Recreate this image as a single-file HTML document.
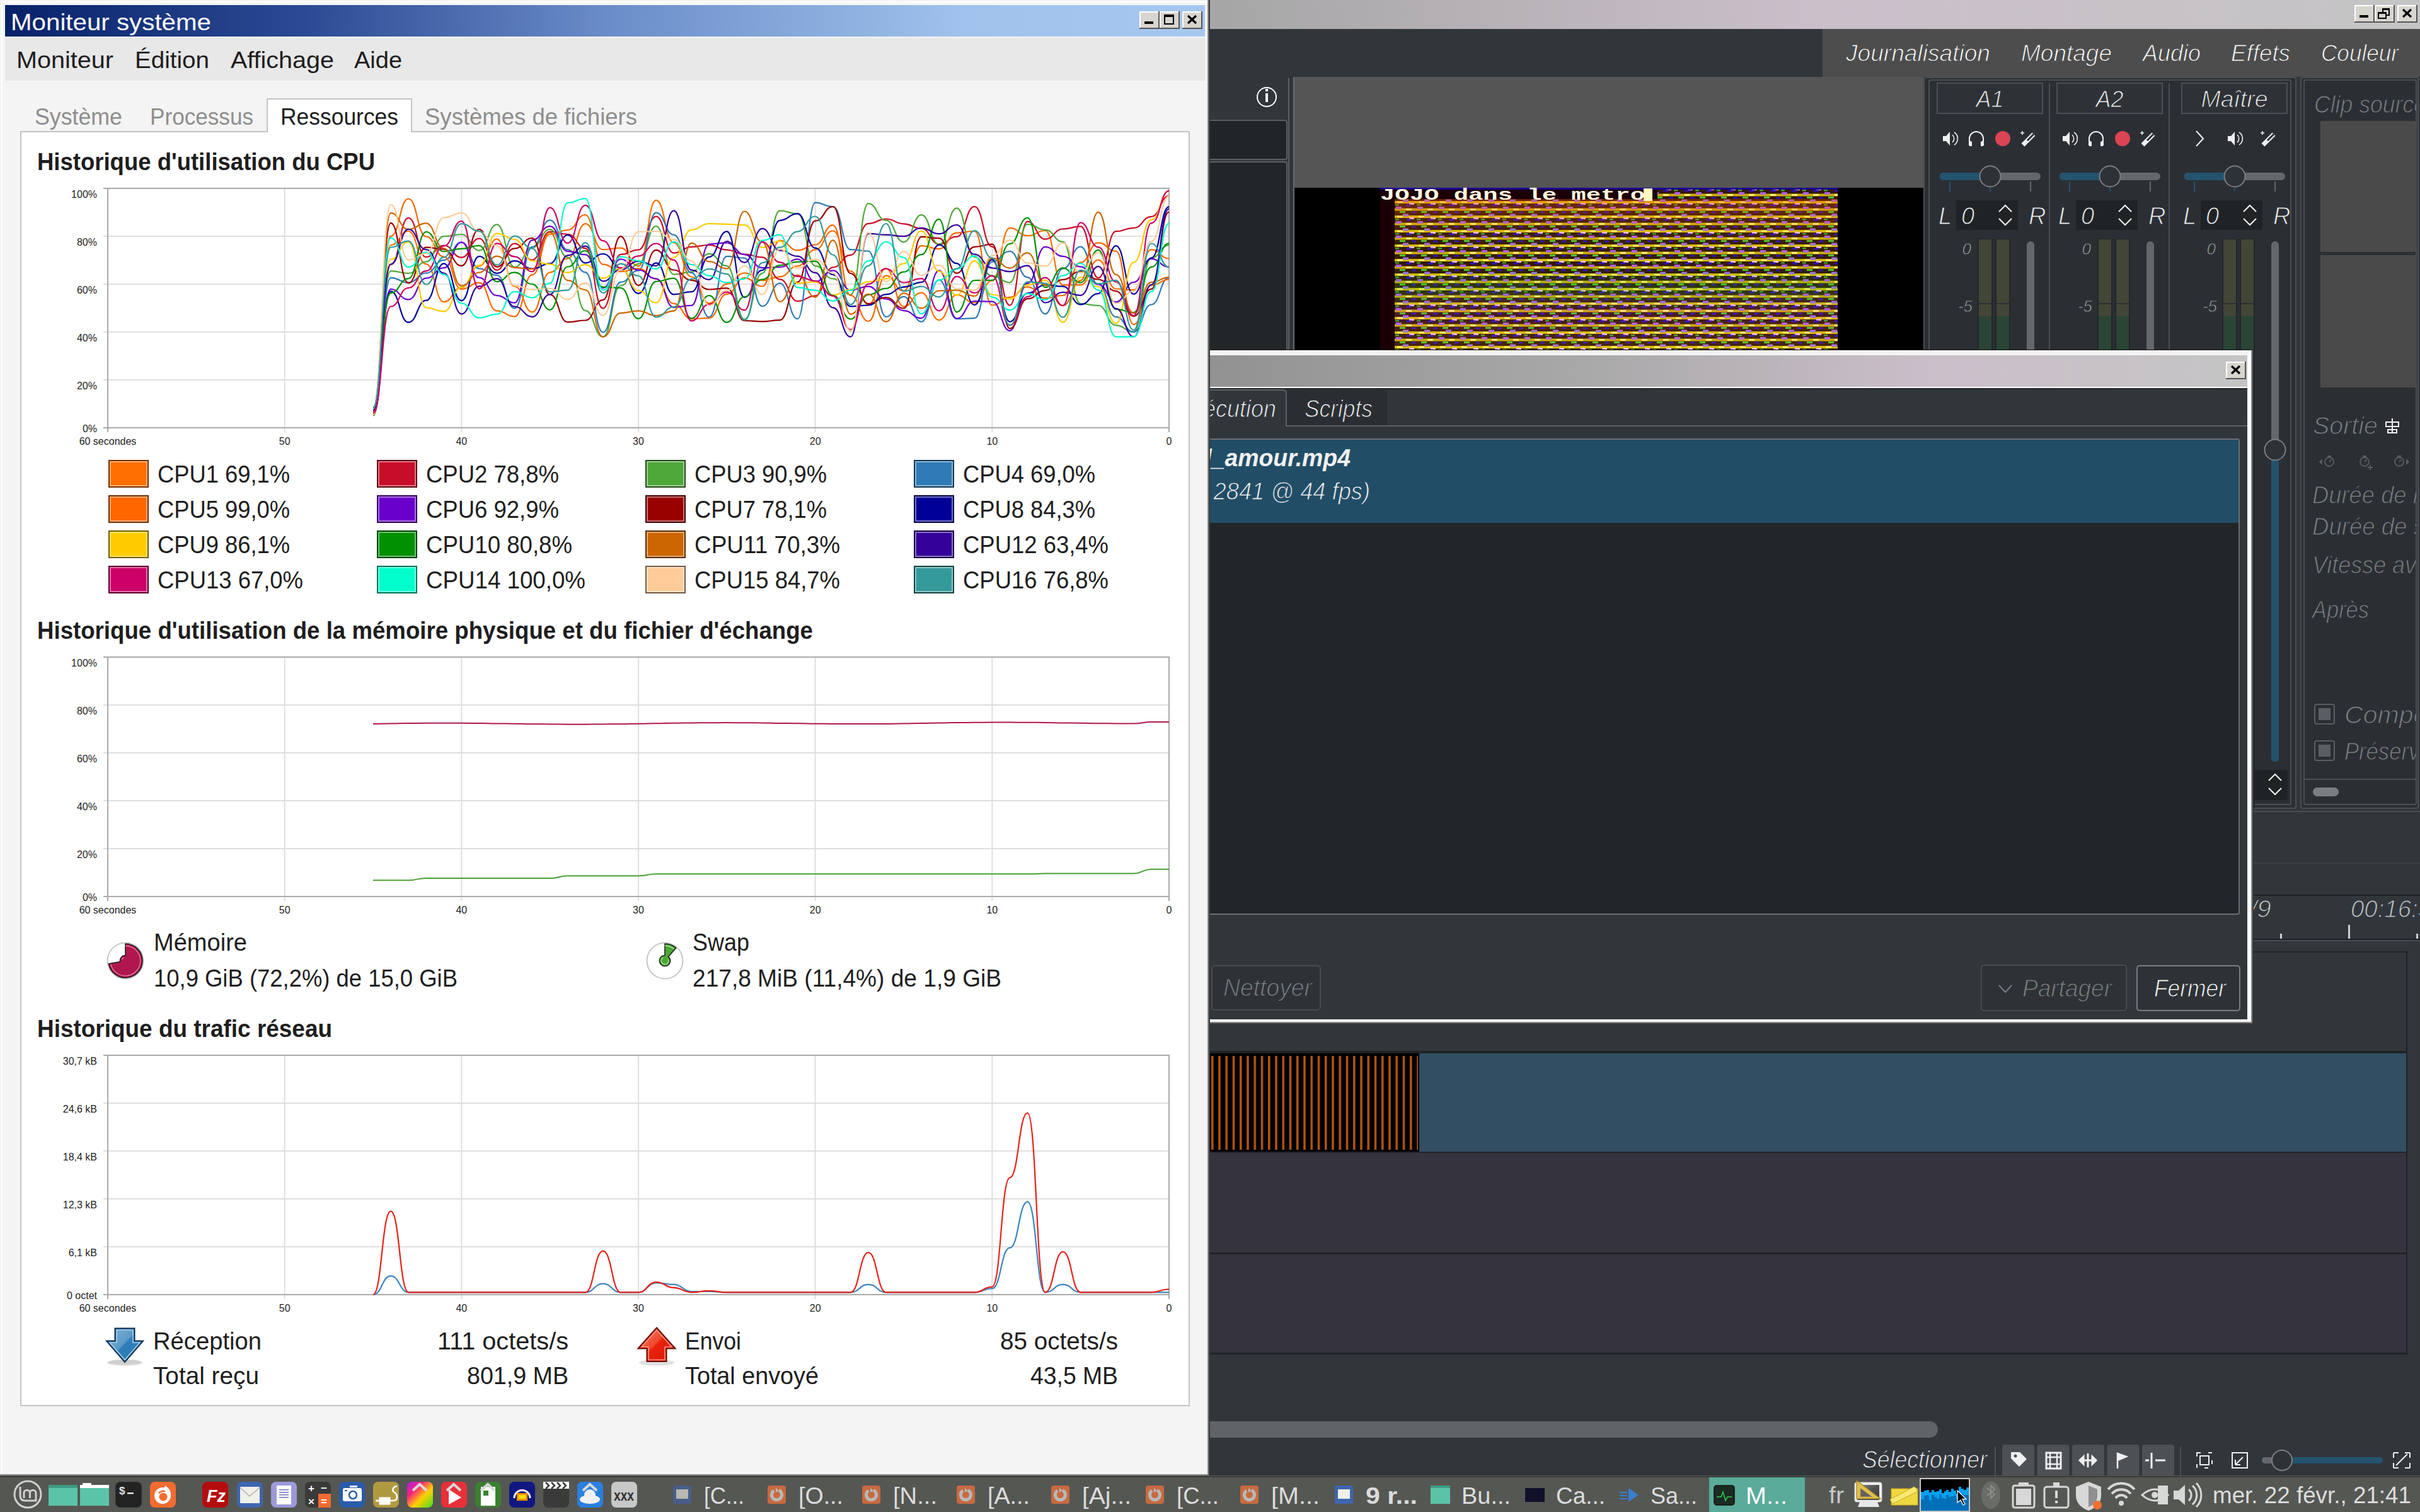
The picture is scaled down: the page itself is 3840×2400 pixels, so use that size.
<!DOCTYPE html><html><head><meta charset="utf-8"><style>html,body{margin:0;padding:0;width:3840px;height:2400px;overflow:hidden;background:#31363b}svg{display:block;font-family:"Liberation Sans",sans-serif}</style></head><body><svg width="3840" height="2400" viewBox="0 0 3840 2400"><rect x="0" y="0" width="1920" height="2344" fill="#f4f4f4" />
<rect x="2" y="2" width="1914" height="2" fill="#ffffff" />
<rect x="2" y="2" width="2" height="2340" fill="#ffffff" />
<rect x="7" y="7" width="1906" height="1" fill="#ffffff" />
<rect x="7" y="7" width="1" height="52" fill="#ffffff" />
<rect x="1916" y="0" width="2" height="2344" fill="#888888" />
<rect x="1918" y="0" width="2" height="2344" fill="#3a3a3a" />
<defs><linearGradient id="tb" x1="0" x2="1" y1="0" y2="0"><stop offset="0" stop-color="#08226a"/><stop offset="0.25" stop-color="#2c4a94"/><stop offset="0.5" stop-color="#6a8cc8"/><stop offset="0.8" stop-color="#a0c2ec"/><stop offset="1" stop-color="#a6c8f0"/></linearGradient></defs>
<rect x="8" y="8" width="1904" height="50" fill="url(#tb)" />
<text x="17" y="48" font-size="37.5" fill="#ffffff" textLength="318" lengthAdjust="spacingAndGlyphs" >Moniteur système</text>
<rect x="1808" y="18" width="32" height="28" fill="#555555" />
<rect x="1808" y="18" width="30" height="26" fill="#ffffff" />
<rect x="1810" y="20" width="28" height="24" fill="#d8d4ce" />
<rect x="1816" y="34" width="14" height="4" fill="#000" />
<rect x="1840" y="18" width="32" height="28" fill="#555555" />
<rect x="1840" y="18" width="30" height="26" fill="#ffffff" />
<rect x="1842" y="20" width="28" height="24" fill="#d8d4ce" />
<rect x="1848" y="24" width="14" height="14" fill="none" stroke="#000" stroke-width="2"/>
<rect x="1847" y="23" width="16" height="4" fill="#000" />
<rect x="1876" y="18" width="32" height="28" fill="#555555" />
<rect x="1876" y="18" width="30" height="26" fill="#ffffff" />
<rect x="1878" y="20" width="28" height="24" fill="#d8d4ce" />
<path d="M1885 25 L1898 37 M1898 25 L1885 37" stroke="#000" stroke-width="3.2"/>
<rect x="8" y="60" width="1904" height="68" fill="#e8e8e8" />
<text x="26" y="108" font-size="37.5" fill="#1e1e1e" textLength="154" lengthAdjust="spacingAndGlyphs" >Moniteur</text>
<text x="214" y="108" font-size="37.5" fill="#1e1e1e" textLength="118" lengthAdjust="spacingAndGlyphs" >Édition</text>
<text x="366" y="108" font-size="37.5" fill="#1e1e1e" textLength="164" lengthAdjust="spacingAndGlyphs" >Affichage</text>
<text x="562" y="108" font-size="37.5" fill="#1e1e1e" textLength="76" lengthAdjust="spacingAndGlyphs" >Aide</text>
<rect x="33" y="209" width="1854" height="2022" fill="#ffffff" stroke="#c4c4c4" stroke-width="2"/>
<path d="M424 210 L424 157 L653 157 L653 210" fill="#ffffff" stroke="#c4c4c4" stroke-width="2"/>
<rect x="425" y="207" width="227" height="4" fill="#ffffff" />
<text x="55" y="198" font-size="37.5" fill="#8e8e8e" textLength="139" lengthAdjust="spacingAndGlyphs" >Système</text>
<text x="238" y="198" font-size="37.5" fill="#8e8e8e" textLength="164" lengthAdjust="spacingAndGlyphs" >Processus</text>
<text x="445" y="198" font-size="37.5" fill="#1e1e1e" textLength="187" lengthAdjust="spacingAndGlyphs" >Ressources</text>
<text x="674" y="198" font-size="37.5" fill="#8e8e8e" textLength="337" lengthAdjust="spacingAndGlyphs" >Systèmes de fichiers</text>
<text x="59" y="270" font-size="38" fill="#1e1e1e" font-weight="bold" textLength="536" lengthAdjust="spacingAndGlyphs" >Historique d'utilisation du CPU</text>
<rect x="164" y="374" width="1691" height="2" fill="#dfdfdf" />
<rect x="164" y="450" width="1691" height="2" fill="#dfdfdf" />
<rect x="164" y="526" width="1691" height="2" fill="#dfdfdf" />
<rect x="164" y="602" width="1691" height="2" fill="#dfdfdf" />
<rect x="450.6666666666667" y="299" width="2" height="387" fill="#dfdfdf" />
<rect x="731.3333333333334" y="299" width="2" height="387" fill="#dfdfdf" />
<rect x="1012.0" y="299" width="2" height="387" fill="#dfdfdf" />
<rect x="1292.6666666666667" y="299" width="2" height="387" fill="#dfdfdf" />
<rect x="1573.3333333333333" y="299" width="2" height="387" fill="#dfdfdf" />
<rect x="164" y="298" width="1692" height="2" fill="#a9aba9" />
<rect x="164" y="678" width="1692" height="2" fill="#a9aba9" />
<rect x="170" y="298" width="2" height="388" fill="#aaaaaa" />
<rect x="1854" y="298" width="2" height="388" fill="#aaaaaa" />
<text x="154" y="314" font-size="16" fill="#1e1e1e" text-anchor="end" >100%</text>
<text x="154" y="390" font-size="16" fill="#1e1e1e" text-anchor="end" >80%</text>
<text x="154" y="466" font-size="16" fill="#1e1e1e" text-anchor="end" >60%</text>
<text x="154" y="542" font-size="16" fill="#1e1e1e" text-anchor="end" >40%</text>
<text x="154" y="618" font-size="16" fill="#1e1e1e" text-anchor="end" >20%</text>
<text x="154" y="686" font-size="16" fill="#1e1e1e" text-anchor="end" >0%</text>
<text x="171.0" y="706" font-size="16" fill="#1e1e1e" text-anchor="middle" >60 secondes</text>
<text x="451.6666666666667" y="706" font-size="16" fill="#1e1e1e" text-anchor="middle" >50</text>
<text x="732.3333333333334" y="706" font-size="16" fill="#1e1e1e" text-anchor="middle" >40</text>
<text x="1013.0" y="706" font-size="16" fill="#1e1e1e" text-anchor="middle" >30</text>
<text x="1293.6666666666667" y="706" font-size="16" fill="#1e1e1e" text-anchor="middle" >20</text>
<text x="1574.3333333333333" y="706" font-size="16" fill="#1e1e1e" text-anchor="middle" >10</text>
<text x="1855.0" y="706" font-size="16" fill="#1e1e1e" text-anchor="middle" >0</text>
<g fill="none" stroke-width="2.2" stroke-linejoin="round">
<path d="M592.0 653.1 C606.0 653.1 606.0 389.0 620.1 389.0 C634.1 389.0 634.1 367.0 648.1 367.0 C662.2 367.0 662.2 419.1 676.2 419.1 C690.2 419.1 690.2 479.2 704.3 479.2 C718.3 479.2 718.3 456.4 732.3 456.4 C746.4 456.4 746.4 422.3 760.4 422.3 C774.4 422.3 774.4 379.4 788.5 379.4 C802.5 379.4 802.5 454.6 816.5 454.6 C830.6 454.6 830.6 495.4 844.6 495.4 C858.6 495.4 858.6 432.3 872.7 432.3 C886.7 432.3 886.7 410.4 900.7 410.4 C914.8 410.4 914.8 355.2 928.8 355.2 C942.8 355.2 942.8 396.2 956.9 396.2 C970.9 396.2 970.9 393.7 984.9 393.7 C999.0 393.7 999.0 422.4 1013.0 422.4 C1027.0 422.4 1027.0 317.9 1041.1 317.9 C1055.1 317.9 1055.1 385.1 1069.1 385.1 C1083.2 385.1 1083.2 439.5 1097.2 439.5 C1111.2 439.5 1111.2 481.4 1125.3 481.4 C1139.3 481.4 1139.3 450.8 1153.3 450.8 C1167.4 450.8 1167.4 433.4 1181.4 433.4 C1195.4 433.4 1195.4 445.2 1209.5 445.2 C1223.5 445.2 1223.5 439.3 1237.5 439.3 C1251.6 439.3 1251.6 422.3 1265.6 422.3 C1279.6 422.3 1279.6 396.3 1293.7 396.3 C1307.7 396.3 1307.7 366.4 1321.7 366.4 C1335.8 366.4 1335.8 430.3 1349.8 430.3 C1363.8 430.3 1363.8 483.2 1377.9 483.2 C1391.9 483.2 1391.9 426.4 1405.9 426.4 C1420.0 426.4 1420.0 486.6 1434.0 486.6 C1448.0 486.6 1448.0 464.6 1462.1 464.6 C1476.1 464.6 1476.1 508.0 1490.1 508.0 C1504.2 508.0 1504.2 468.0 1518.2 468.0 C1532.2 468.0 1532.2 480.6 1546.3 480.6 C1560.3 480.6 1560.3 445.5 1574.3 445.5 C1588.4 445.5 1588.4 361.8 1602.4 361.8 C1616.4 361.8 1616.4 374.2 1630.5 374.2 C1644.5 374.2 1644.5 366.0 1658.5 366.0 C1672.6 366.0 1672.6 452.4 1686.6 452.4 C1700.6 452.4 1700.6 452.3 1714.7 452.3 C1728.7 452.3 1728.7 412.6 1742.7 412.6 C1756.8 412.6 1756.8 458.5 1770.8 458.5 C1784.8 458.5 1784.8 460.2 1798.9 460.2 C1812.9 460.2 1812.9 396.2 1826.9 396.2 C1841.0 396.2 1841.0 410.5 1855.0 410.5" stroke="#ff6e00"/>
<path d="M592.0 647.1 C606.0 647.1 606.0 420.0 620.1 420.0 C634.1 420.0 634.1 345.8 648.1 345.8 C662.2 345.8 662.2 408.1 676.2 408.1 C690.2 408.1 690.2 389.5 704.3 389.5 C718.3 389.5 718.3 408.7 732.3 408.7 C746.4 408.7 746.4 378.7 760.4 378.7 C774.4 378.7 774.4 428.6 788.5 428.6 C802.5 428.6 802.5 386.6 816.5 386.6 C830.6 386.6 830.6 412.6 844.6 412.6 C858.6 412.6 858.6 367.6 872.7 367.6 C886.7 367.6 886.7 371.8 900.7 371.8 C914.8 371.8 914.8 394.1 928.8 394.1 C942.8 394.1 942.8 489.4 956.9 489.4 C970.9 489.4 970.9 403.9 984.9 403.9 C999.0 403.9 999.0 396.5 1013.0 396.5 C1027.0 396.5 1027.0 343.7 1041.1 343.7 C1055.1 343.7 1055.1 401.7 1069.1 401.7 C1083.2 401.7 1083.2 391.8 1097.2 391.8 C1111.2 391.8 1111.2 388.8 1125.3 388.8 C1139.3 388.8 1139.3 396.6 1153.3 396.6 C1167.4 396.6 1167.4 403.7 1181.4 403.7 C1195.4 403.7 1195.4 408.3 1209.5 408.3 C1223.5 408.3 1223.5 443.3 1237.5 443.3 C1251.6 443.3 1251.6 478.1 1265.6 478.1 C1279.6 478.1 1279.6 469.7 1293.7 469.7 C1307.7 469.7 1307.7 424.3 1321.7 424.3 C1335.8 424.3 1335.8 404.9 1349.8 404.9 C1363.8 404.9 1363.8 354.8 1377.9 354.8 C1391.9 354.8 1391.9 347.5 1405.9 347.5 C1420.0 347.5 1420.0 355.3 1434.0 355.3 C1448.0 355.3 1448.0 362.6 1462.1 362.6 C1476.1 362.6 1476.1 387.7 1490.1 387.7 C1504.2 387.7 1504.2 375.7 1518.2 375.7 C1532.2 375.7 1532.2 327.8 1546.3 327.8 C1560.3 327.8 1560.3 391.7 1574.3 391.7 C1588.4 391.7 1588.4 484.6 1602.4 484.6 C1616.4 484.6 1616.4 351.6 1630.5 351.6 C1644.5 351.6 1644.5 379.7 1658.5 379.7 C1672.6 379.7 1672.6 363.4 1686.6 363.4 C1700.6 363.4 1700.6 359.3 1714.7 359.3 C1728.7 359.3 1728.7 441.2 1742.7 441.2 C1756.8 441.2 1756.8 367.2 1770.8 367.2 C1784.8 367.2 1784.8 361.8 1798.9 361.8 C1812.9 361.8 1812.9 343.9 1826.9 343.9 C1841.0 343.9 1841.0 310.9 1855.0 310.9" stroke="#c80d28"/>
<path d="M592.0 648.3 C606.0 648.3 606.0 430.2 620.1 430.2 C634.1 430.2 634.1 433.9 648.1 433.9 C662.2 433.9 662.2 415.4 676.2 415.4 C690.2 415.4 690.2 375.2 704.3 375.2 C718.3 375.2 718.3 372.0 732.3 372.0 C746.4 372.0 746.4 397.6 760.4 397.6 C774.4 397.6 774.4 356.3 788.5 356.3 C802.5 356.3 802.5 424.0 816.5 424.0 C830.6 424.0 830.6 393.0 844.6 393.0 C858.6 393.0 858.6 364.1 872.7 364.1 C886.7 364.1 886.7 408.4 900.7 408.4 C914.8 408.4 914.8 493.1 928.8 493.1 C942.8 493.1 942.8 534.6 956.9 534.6 C970.9 534.6 970.9 453.5 984.9 453.5 C999.0 453.5 999.0 418.8 1013.0 418.8 C1027.0 418.8 1027.0 358.8 1041.1 358.8 C1055.1 358.8 1055.1 435.5 1069.1 435.5 C1083.2 435.5 1083.2 431.7 1097.2 431.7 C1111.2 431.7 1111.2 402.9 1125.3 402.9 C1139.3 402.9 1139.3 422.1 1153.3 422.1 C1167.4 422.1 1167.4 506.8 1181.4 506.8 C1195.4 506.8 1195.4 433.8 1209.5 433.8 C1223.5 433.8 1223.5 334.4 1237.5 334.4 C1251.6 334.4 1251.6 339.3 1265.6 339.3 C1279.6 339.3 1279.6 422.1 1293.7 422.1 C1307.7 422.1 1307.7 442.4 1321.7 442.4 C1335.8 442.4 1335.8 467.8 1349.8 467.8 C1363.8 467.8 1363.8 323.1 1377.9 323.1 C1391.9 323.1 1391.9 349.8 1405.9 349.8 C1420.0 349.8 1420.0 384.3 1434.0 384.3 C1448.0 384.3 1448.0 341.1 1462.1 341.1 C1476.1 341.1 1476.1 388.1 1490.1 388.1 C1504.2 388.1 1504.2 330.3 1518.2 330.3 C1532.2 330.3 1532.2 407.9 1546.3 407.9 C1560.3 407.9 1560.3 437.9 1574.3 437.9 C1588.4 437.9 1588.4 448.5 1602.4 448.5 C1616.4 448.5 1616.4 356.0 1630.5 356.0 C1644.5 356.0 1644.5 364.8 1658.5 364.8 C1672.6 364.8 1672.6 383.9 1686.6 383.9 C1700.6 383.9 1700.6 482.2 1714.7 482.2 C1728.7 482.2 1728.7 485.0 1742.7 485.0 C1756.8 485.0 1756.8 516.3 1770.8 516.3 C1784.8 516.3 1784.8 526.9 1798.9 526.9 C1812.9 526.9 1812.9 409.3 1826.9 409.3 C1841.0 409.3 1841.0 389.1 1855.0 389.1" stroke="#4ea83a"/>
<path d="M592.0 659.7 C606.0 659.7 606.0 440.9 620.1 440.9 C634.1 440.9 634.1 448.5 648.1 448.5 C662.2 448.5 662.2 433.4 676.2 433.4 C690.2 433.4 690.2 412.9 704.3 412.9 C718.3 412.9 718.3 384.7 732.3 384.7 C746.4 384.7 746.4 426.4 760.4 426.4 C774.4 426.4 774.4 437.0 788.5 437.0 C802.5 437.0 802.5 489.6 816.5 489.6 C830.6 489.6 830.6 391.9 844.6 391.9 C858.6 391.9 858.6 349.3 872.7 349.3 C886.7 349.3 886.7 396.2 900.7 396.2 C914.8 396.2 914.8 432.2 928.8 432.2 C942.8 432.2 942.8 527.5 956.9 527.5 C970.9 527.5 970.9 447.9 984.9 447.9 C999.0 447.9 999.0 429.4 1013.0 429.4 C1027.0 429.4 1027.0 337.6 1041.1 337.6 C1055.1 337.6 1055.1 372.6 1069.1 372.6 C1083.2 372.6 1083.2 432.9 1097.2 432.9 C1111.2 432.9 1111.2 503.4 1125.3 503.4 C1139.3 503.4 1139.3 406.9 1153.3 406.9 C1167.4 406.9 1167.4 409.6 1181.4 409.6 C1195.4 409.6 1195.4 486.2 1209.5 486.2 C1223.5 486.2 1223.5 449.7 1237.5 449.7 C1251.6 449.7 1251.6 506.2 1265.6 506.2 C1279.6 506.2 1279.6 321.7 1293.7 321.7 C1307.7 321.7 1307.7 328.2 1321.7 328.2 C1335.8 328.2 1335.8 396.1 1349.8 396.1 C1363.8 396.1 1363.8 398.5 1377.9 398.5 C1391.9 398.5 1391.9 502.8 1405.9 502.8 C1420.0 502.8 1420.0 470.8 1434.0 470.8 C1448.0 470.8 1448.0 510.7 1462.1 510.7 C1476.1 510.7 1476.1 444.5 1490.1 444.5 C1504.2 444.5 1504.2 506.2 1518.2 506.2 C1532.2 506.2 1532.2 505.1 1546.3 505.1 C1560.3 505.1 1560.3 415.7 1574.3 415.7 C1588.4 415.7 1588.4 398.8 1602.4 398.8 C1616.4 398.8 1616.4 440.1 1630.5 440.1 C1644.5 440.1 1644.5 498.3 1658.5 498.3 C1672.6 498.3 1672.6 426.5 1686.6 426.5 C1700.6 426.5 1700.6 391.7 1714.7 391.7 C1728.7 391.7 1728.7 451.2 1742.7 451.2 C1756.8 451.2 1756.8 502.9 1770.8 502.9 C1784.8 502.9 1784.8 526.9 1798.9 526.9 C1812.9 526.9 1812.9 483.5 1826.9 483.5 C1841.0 483.5 1841.0 440.6 1855.0 440.6" stroke="#2e7bb5"/>
<path d="M592.0 658.8 C606.0 658.8 606.0 374.8 620.1 374.8 C634.1 374.8 634.1 315.5 648.1 315.5 C662.2 315.5 662.2 375.5 676.2 375.5 C690.2 375.5 690.2 407.5 704.3 407.5 C718.3 407.5 718.3 458.9 732.3 458.9 C746.4 458.9 746.4 448.7 760.4 448.7 C774.4 448.7 774.4 493.4 788.5 493.4 C802.5 493.4 802.5 502.5 816.5 502.5 C830.6 502.5 830.6 436.2 844.6 436.2 C858.6 436.2 858.6 372.0 872.7 372.0 C886.7 372.0 886.7 365.1 900.7 365.1 C914.8 365.1 914.8 341.0 928.8 341.0 C942.8 341.0 942.8 419.6 956.9 419.6 C970.9 419.6 970.9 431.1 984.9 431.1 C999.0 431.1 999.0 426.1 1013.0 426.1 C1027.0 426.1 1027.0 442.8 1041.1 442.8 C1055.1 442.8 1055.1 481.9 1069.1 481.9 C1083.2 481.9 1083.2 506.2 1097.2 506.2 C1111.2 506.2 1111.2 504.8 1125.3 504.8 C1139.3 504.8 1139.3 466.8 1153.3 466.8 C1167.4 466.8 1167.4 441.2 1181.4 441.2 C1195.4 441.2 1195.4 454.5 1209.5 454.5 C1223.5 454.5 1223.5 381.6 1237.5 381.6 C1251.6 381.6 1251.6 397.4 1265.6 397.4 C1279.6 397.4 1279.6 388.5 1293.7 388.5 C1307.7 388.5 1307.7 357.4 1321.7 357.4 C1335.8 357.4 1335.8 468.9 1349.8 468.9 C1363.8 468.9 1363.8 510.0 1377.9 510.0 C1391.9 510.0 1391.9 437.6 1405.9 437.6 C1420.0 437.6 1420.0 461.7 1434.0 461.7 C1448.0 461.7 1448.0 390.1 1462.1 390.1 C1476.1 390.1 1476.1 395.1 1490.1 395.1 C1504.2 395.1 1504.2 369.6 1518.2 369.6 C1532.2 369.6 1532.2 367.0 1546.3 367.0 C1560.3 367.0 1560.3 484.5 1574.3 484.5 C1588.4 484.5 1588.4 471.9 1602.4 471.9 C1616.4 471.9 1616.4 455.4 1630.5 455.4 C1644.5 455.4 1644.5 473.4 1658.5 473.4 C1672.6 473.4 1672.6 469.0 1686.6 469.0 C1700.6 469.0 1700.6 416.5 1714.7 416.5 C1728.7 416.5 1728.7 385.4 1742.7 385.4 C1756.8 385.4 1756.8 398.7 1770.8 398.7 C1784.8 398.7 1784.8 515.1 1798.9 515.1 C1812.9 515.1 1812.9 452.7 1826.9 452.7 C1841.0 452.7 1841.0 443.6 1855.0 443.6" stroke="#ff6600"/>
<path d="M592.0 655.8 C606.0 655.8 606.0 458.8 620.1 458.8 C634.1 458.8 634.1 475.4 648.1 475.4 C662.2 475.4 662.2 441.6 676.2 441.6 C690.2 441.6 690.2 425.2 704.3 425.2 C718.3 425.2 718.3 384.6 732.3 384.6 C746.4 384.6 746.4 440.7 760.4 440.7 C774.4 440.7 774.4 469.1 788.5 469.1 C802.5 469.1 802.5 480.6 816.5 480.6 C830.6 480.6 830.6 381.1 844.6 381.1 C858.6 381.1 858.6 359.1 872.7 359.1 C886.7 359.1 886.7 398.8 900.7 398.8 C914.8 398.8 914.8 404.1 928.8 404.1 C942.8 404.1 942.8 457.0 956.9 457.0 C970.9 457.0 970.9 411.3 984.9 411.3 C999.0 411.3 999.0 428.5 1013.0 428.5 C1027.0 428.5 1027.0 442.3 1041.1 442.3 C1055.1 442.3 1055.1 487.8 1069.1 487.8 C1083.2 487.8 1083.2 484.8 1097.2 484.8 C1111.2 484.8 1111.2 387.5 1125.3 387.5 C1139.3 387.5 1139.3 385.4 1153.3 385.4 C1167.4 385.4 1167.4 404.1 1181.4 404.1 C1195.4 404.1 1195.4 425.1 1209.5 425.1 C1223.5 425.1 1223.5 424.0 1237.5 424.0 C1251.6 424.0 1251.6 411.4 1265.6 411.4 C1279.6 411.4 1279.6 446.8 1293.7 446.8 C1307.7 446.8 1307.7 429.3 1321.7 429.3 C1335.8 429.3 1335.8 460.5 1349.8 460.5 C1363.8 460.5 1363.8 454.7 1377.9 454.7 C1391.9 454.7 1391.9 474.5 1405.9 474.5 C1420.0 474.5 1420.0 493.1 1434.0 493.1 C1448.0 493.1 1448.0 505.1 1462.1 505.1 C1476.1 505.1 1476.1 429.4 1490.1 429.4 C1504.2 429.4 1504.2 505.5 1518.2 505.5 C1532.2 505.5 1532.2 478.0 1546.3 478.0 C1560.3 478.0 1560.3 478.7 1574.3 478.7 C1588.4 478.7 1588.4 524.9 1602.4 524.9 C1616.4 524.9 1616.4 449.7 1630.5 449.7 C1644.5 449.7 1644.5 391.8 1658.5 391.8 C1672.6 391.8 1672.6 406.8 1686.6 406.8 C1700.6 406.8 1700.6 423.4 1714.7 423.4 C1728.7 423.4 1728.7 451.4 1742.7 451.4 C1756.8 451.4 1756.8 479.4 1770.8 479.4 C1784.8 479.4 1784.8 448.0 1798.9 448.0 C1812.9 448.0 1812.9 410.9 1826.9 410.9 C1841.0 410.9 1841.0 423.8 1855.0 423.8" stroke="#6a00cc"/>
<path d="M592.0 650.7 C606.0 650.7 606.0 353.9 620.1 353.9 C634.1 353.9 634.1 449.2 648.1 449.2 C662.2 449.2 662.2 392.7 676.2 392.7 C690.2 392.7 690.2 395.6 704.3 395.6 C718.3 395.6 718.3 421.8 732.3 421.8 C746.4 421.8 746.4 364.0 760.4 364.0 C774.4 364.0 774.4 423.6 788.5 423.6 C802.5 423.6 802.5 394.4 816.5 394.4 C830.6 394.4 830.6 377.8 844.6 377.8 C858.6 377.8 858.6 467.7 872.7 467.7 C886.7 467.7 886.7 511.3 900.7 511.3 C914.8 511.3 914.8 508.5 928.8 508.5 C942.8 508.5 942.8 476.1 956.9 476.1 C970.9 476.1 970.9 375.2 984.9 375.2 C999.0 375.2 999.0 453.0 1013.0 453.0 C1027.0 453.0 1027.0 396.8 1041.1 396.8 C1055.1 396.8 1055.1 428.5 1069.1 428.5 C1083.2 428.5 1083.2 444.8 1097.2 444.8 C1111.2 444.8 1111.2 459.5 1125.3 459.5 C1139.3 459.5 1139.3 457.4 1153.3 457.4 C1167.4 457.4 1167.4 509.0 1181.4 509.0 C1195.4 509.0 1195.4 510.4 1209.5 510.4 C1223.5 510.4 1223.5 508.1 1237.5 508.1 C1251.6 508.1 1251.6 447.7 1265.6 447.7 C1279.6 447.7 1279.6 350.6 1293.7 350.6 C1307.7 350.6 1307.7 328.0 1321.7 328.0 C1335.8 328.0 1335.8 434.0 1349.8 434.0 C1363.8 434.0 1363.8 482.1 1377.9 482.1 C1391.9 482.1 1391.9 472.2 1405.9 472.2 C1420.0 472.2 1420.0 489.5 1434.0 489.5 C1448.0 489.5 1448.0 375.9 1462.1 375.9 C1476.1 375.9 1476.1 378.2 1490.1 378.2 C1504.2 378.2 1504.2 433.7 1518.2 433.7 C1532.2 433.7 1532.2 391.8 1546.3 391.8 C1560.3 391.8 1560.3 387.6 1574.3 387.6 C1588.4 387.6 1588.4 521.4 1602.4 521.4 C1616.4 521.4 1616.4 474.2 1630.5 474.2 C1644.5 474.2 1644.5 461.2 1658.5 461.2 C1672.6 461.2 1672.6 443.9 1686.6 443.9 C1700.6 443.9 1700.6 430.5 1714.7 430.5 C1728.7 430.5 1728.7 443.5 1742.7 443.5 C1756.8 443.5 1756.8 462.1 1770.8 462.1 C1784.8 462.1 1784.8 502.0 1798.9 502.0 C1812.9 502.0 1812.9 458.9 1826.9 458.9 C1841.0 458.9 1841.0 336.5 1855.0 336.5" stroke="#990000"/>
<path d="M592.0 657.9 C606.0 657.9 606.0 462.4 620.1 462.4 C634.1 462.4 634.1 511.7 648.1 511.7 C662.2 511.7 662.2 476.9 676.2 476.9 C690.2 476.9 690.2 418.3 704.3 418.3 C718.3 418.3 718.3 477.2 732.3 477.2 C746.4 477.2 746.4 406.8 760.4 406.8 C774.4 406.8 774.4 433.8 788.5 433.8 C802.5 433.8 802.5 414.2 816.5 414.2 C830.6 414.2 830.6 426.7 844.6 426.7 C858.6 426.7 858.6 418.3 872.7 418.3 C886.7 418.3 886.7 373.0 900.7 373.0 C914.8 373.0 914.8 417.4 928.8 417.4 C942.8 417.4 942.8 403.0 956.9 403.0 C970.9 403.0 970.9 425.5 984.9 425.5 C999.0 425.5 999.0 465.8 1013.0 465.8 C1027.0 465.8 1027.0 417.3 1041.1 417.3 C1055.1 417.3 1055.1 467.3 1069.1 467.3 C1083.2 467.3 1083.2 463.2 1097.2 463.2 C1111.2 463.2 1111.2 407.8 1125.3 407.8 C1139.3 407.8 1139.3 367.4 1153.3 367.4 C1167.4 367.4 1167.4 472.0 1181.4 472.0 C1195.4 472.0 1195.4 428.9 1209.5 428.9 C1223.5 428.9 1223.5 349.8 1237.5 349.8 C1251.6 349.8 1251.6 339.1 1265.6 339.1 C1279.6 339.1 1279.6 393.7 1293.7 393.7 C1307.7 393.7 1307.7 436.0 1321.7 436.0 C1335.8 436.0 1335.8 486.3 1349.8 486.3 C1363.8 486.3 1363.8 484.5 1377.9 484.5 C1391.9 484.5 1391.9 467.4 1405.9 467.4 C1420.0 467.4 1420.0 455.6 1434.0 455.6 C1448.0 455.6 1448.0 448.0 1462.1 448.0 C1476.1 448.0 1476.1 388.7 1490.1 388.7 C1504.2 388.7 1504.2 418.1 1518.2 418.1 C1532.2 418.1 1532.2 484.1 1546.3 484.1 C1560.3 484.1 1560.3 412.2 1574.3 412.2 C1588.4 412.2 1588.4 510.6 1602.4 510.6 C1616.4 510.6 1616.4 465.3 1630.5 465.3 C1644.5 465.3 1644.5 452.4 1658.5 452.4 C1672.6 452.4 1672.6 454.7 1686.6 454.7 C1700.6 454.7 1700.6 483.4 1714.7 483.4 C1728.7 483.4 1728.7 466.2 1742.7 466.2 C1756.8 466.2 1756.8 390.1 1770.8 390.1 C1784.8 390.1 1784.8 466.8 1798.9 466.8 C1812.9 466.8 1812.9 409.5 1826.9 409.5 C1841.0 409.5 1841.0 328.2 1855.0 328.2" stroke="#000099"/>
<path d="M592.0 658.1 C606.0 658.1 606.0 411.5 620.1 411.5 C634.1 411.5 634.1 383.8 648.1 383.8 C662.2 383.8 662.2 488.3 676.2 488.3 C690.2 488.3 690.2 494.4 704.3 494.4 C718.3 494.4 718.3 455.9 732.3 455.9 C746.4 455.9 746.4 421.2 760.4 421.2 C774.4 421.2 774.4 370.6 788.5 370.6 C802.5 370.6 802.5 379.8 816.5 379.8 C830.6 379.8 830.6 413.9 844.6 413.9 C858.6 413.9 858.6 419.4 872.7 419.4 C886.7 419.4 886.7 432.6 900.7 432.6 C914.8 432.6 914.8 420.1 928.8 420.1 C942.8 420.1 942.8 441.6 956.9 441.6 C970.9 441.6 970.9 426.3 984.9 426.3 C999.0 426.3 999.0 461.3 1013.0 461.3 C1027.0 461.3 1027.0 480.5 1041.1 480.5 C1055.1 480.5 1055.1 408.5 1069.1 408.5 C1083.2 408.5 1083.2 364.8 1097.2 364.8 C1111.2 364.8 1111.2 355.0 1125.3 355.0 C1139.3 355.0 1139.3 355.8 1153.3 355.8 C1167.4 355.8 1167.4 357.2 1181.4 357.2 C1195.4 357.2 1195.4 392.8 1209.5 392.8 C1223.5 392.8 1223.5 382.7 1237.5 382.7 C1251.6 382.7 1251.6 449.4 1265.6 449.4 C1279.6 449.4 1279.6 447.3 1293.7 447.3 C1307.7 447.3 1307.7 468.4 1321.7 468.4 C1335.8 468.4 1335.8 459.7 1349.8 459.7 C1363.8 459.7 1363.8 447.3 1377.9 447.3 C1391.9 447.3 1391.9 442.3 1405.9 442.3 C1420.0 442.3 1420.0 418.5 1434.0 418.5 C1448.0 418.5 1448.0 366.7 1462.1 366.7 C1476.1 366.7 1476.1 430.6 1490.1 430.6 C1504.2 430.6 1504.2 468.6 1518.2 468.6 C1532.2 468.6 1532.2 414.2 1546.3 414.2 C1560.3 414.2 1560.3 467.5 1574.3 467.5 C1588.4 467.5 1588.4 474.5 1602.4 474.5 C1616.4 474.5 1616.4 452.4 1630.5 452.4 C1644.5 452.4 1644.5 444.7 1658.5 444.7 C1672.6 444.7 1672.6 511.5 1686.6 511.5 C1700.6 511.5 1700.6 440.0 1714.7 440.0 C1728.7 440.0 1728.7 455.0 1742.7 455.0 C1756.8 455.0 1756.8 513.4 1770.8 513.4 C1784.8 513.4 1784.8 416.3 1798.9 416.3 C1812.9 416.3 1812.9 348.8 1826.9 348.8 C1841.0 348.8 1841.0 302.8 1855.0 302.8" stroke="#ffcc00"/>
<path d="M592.0 646.5 C606.0 646.5 606.0 465.1 620.1 465.1 C634.1 465.1 634.1 442.1 648.1 442.1 C662.2 442.1 662.2 368.0 676.2 368.0 C690.2 368.0 690.2 399.2 704.3 399.2 C718.3 399.2 718.3 394.9 732.3 394.9 C746.4 394.9 746.4 389.9 760.4 389.9 C774.4 389.9 774.4 447.1 788.5 447.1 C802.5 447.1 802.5 432.3 816.5 432.3 C830.6 432.3 830.6 451.2 844.6 451.2 C858.6 451.2 858.6 491.8 872.7 491.8 C886.7 491.8 886.7 423.5 900.7 423.5 C914.8 423.5 914.8 398.0 928.8 398.0 C942.8 398.0 942.8 455.6 956.9 455.6 C970.9 455.6 970.9 457.0 984.9 457.0 C999.0 457.0 999.0 505.9 1013.0 505.9 C1027.0 505.9 1027.0 446.8 1041.1 446.8 C1055.1 446.8 1055.1 441.6 1069.1 441.6 C1083.2 441.6 1083.2 505.3 1097.2 505.3 C1111.2 505.3 1111.2 469.2 1125.3 469.2 C1139.3 469.2 1139.3 511.6 1153.3 511.6 C1167.4 511.6 1167.4 471.0 1181.4 471.0 C1195.4 471.0 1195.4 443.6 1209.5 443.6 C1223.5 443.6 1223.5 421.1 1237.5 421.1 C1251.6 421.1 1251.6 415.6 1265.6 415.6 C1279.6 415.6 1279.6 414.7 1293.7 414.7 C1307.7 414.7 1307.7 469.1 1321.7 469.1 C1335.8 469.1 1335.8 506.5 1349.8 506.5 C1363.8 506.5 1363.8 467.8 1377.9 467.8 C1391.9 467.8 1391.9 457.9 1405.9 457.9 C1420.0 457.9 1420.0 431.7 1434.0 431.7 C1448.0 431.7 1448.0 404.1 1462.1 404.1 C1476.1 404.1 1476.1 347.8 1490.1 347.8 C1504.2 347.8 1504.2 495.4 1518.2 495.4 C1532.2 495.4 1532.2 445.0 1546.3 445.0 C1560.3 445.0 1560.3 444.9 1574.3 444.9 C1588.4 444.9 1588.4 387.0 1602.4 387.0 C1616.4 387.0 1616.4 345.8 1630.5 345.8 C1644.5 345.8 1644.5 456.1 1658.5 456.1 C1672.6 456.1 1672.6 425.4 1686.6 425.4 C1700.6 425.4 1700.6 448.5 1714.7 448.5 C1728.7 448.5 1728.7 396.8 1742.7 396.8 C1756.8 396.8 1756.8 490.8 1770.8 490.8 C1784.8 490.8 1784.8 496.1 1798.9 496.1 C1812.9 496.1 1812.9 423.9 1826.9 423.9 C1841.0 423.9 1841.0 386.4 1855.0 386.4" stroke="#009000"/>
<path d="M592.0 649.3 C606.0 649.3 606.0 338.2 620.1 338.2 C634.1 338.2 634.1 364.0 648.1 364.0 C662.2 364.0 662.2 354.3 676.2 354.3 C690.2 354.3 690.2 394.1 704.3 394.1 C718.3 394.1 718.3 453.7 732.3 453.7 C746.4 453.7 746.4 432.5 760.4 432.5 C774.4 432.5 774.4 406.7 788.5 406.7 C802.5 406.7 802.5 424.8 816.5 424.8 C830.6 424.8 830.6 427.1 844.6 427.1 C858.6 427.1 858.6 368.8 872.7 368.8 C886.7 368.8 886.7 445.2 900.7 445.2 C914.8 445.2 914.8 460.0 928.8 460.0 C942.8 460.0 942.8 534.6 956.9 534.6 C970.9 534.6 970.9 496.9 984.9 496.9 C999.0 496.9 999.0 493.4 1013.0 493.4 C1027.0 493.4 1027.0 501.0 1041.1 501.0 C1055.1 501.0 1055.1 493.6 1069.1 493.6 C1083.2 493.6 1083.2 385.8 1097.2 385.8 C1111.2 385.8 1111.2 415.2 1125.3 415.2 C1139.3 415.2 1139.3 426.5 1153.3 426.5 C1167.4 426.5 1167.4 335.5 1181.4 335.5 C1195.4 335.5 1195.4 384.4 1209.5 384.4 C1223.5 384.4 1223.5 478.8 1237.5 478.8 C1251.6 478.8 1251.6 436.6 1265.6 436.6 C1279.6 436.6 1279.6 471.6 1293.7 471.6 C1307.7 471.6 1307.7 381.4 1321.7 381.4 C1335.8 381.4 1335.8 498.7 1349.8 498.7 C1363.8 498.7 1363.8 466.8 1377.9 466.8 C1391.9 466.8 1391.9 510.7 1405.9 510.7 C1420.0 510.7 1420.0 465.4 1434.0 465.4 C1448.0 465.4 1448.0 489.2 1462.1 489.2 C1476.1 489.2 1476.1 461.5 1490.1 461.5 C1504.2 461.5 1504.2 460.6 1518.2 460.6 C1532.2 460.6 1532.2 470.0 1546.3 470.0 C1560.3 470.0 1560.3 409.7 1574.3 409.7 C1588.4 409.7 1588.4 425.4 1602.4 425.4 C1616.4 425.4 1616.4 401.4 1630.5 401.4 C1644.5 401.4 1644.5 452.4 1658.5 452.4 C1672.6 452.4 1672.6 485.1 1686.6 485.1 C1700.6 485.1 1700.6 445.3 1714.7 445.3 C1728.7 445.3 1728.7 336.8 1742.7 336.8 C1756.8 336.8 1756.8 435.8 1770.8 435.8 C1784.8 435.8 1784.8 497.1 1798.9 497.1 C1812.9 497.1 1812.9 448.1 1826.9 448.1 C1841.0 448.1 1841.0 440.2 1855.0 440.2" stroke="#cc6600"/>
<path d="M592.0 651.9 C606.0 651.9 606.0 419.4 620.1 419.4 C634.1 419.4 634.1 363.9 648.1 363.9 C662.2 363.9 662.2 396.1 676.2 396.1 C690.2 396.1 690.2 433.5 704.3 433.5 C718.3 433.5 718.3 498.3 732.3 498.3 C746.4 498.3 746.4 454.4 760.4 454.4 C774.4 454.4 774.4 442.4 788.5 442.4 C802.5 442.4 802.5 486.6 816.5 486.6 C830.6 486.6 830.6 502.8 844.6 502.8 C858.6 502.8 858.6 467.3 872.7 467.3 C886.7 467.3 886.7 405.4 900.7 405.4 C914.8 405.4 914.8 390.6 928.8 390.6 C942.8 390.6 942.8 446.4 956.9 446.4 C970.9 446.4 970.9 428.0 984.9 428.0 C999.0 428.0 999.0 414.7 1013.0 414.7 C1027.0 414.7 1027.0 422.0 1041.1 422.0 C1055.1 422.0 1055.1 334.3 1069.1 334.3 C1083.2 334.3 1083.2 428.6 1097.2 428.6 C1111.2 428.6 1111.2 443.8 1125.3 443.8 C1139.3 443.8 1139.3 383.0 1153.3 383.0 C1167.4 383.0 1167.4 416.7 1181.4 416.7 C1195.4 416.7 1195.4 362.9 1209.5 362.9 C1223.5 362.9 1223.5 397.4 1237.5 397.4 C1251.6 397.4 1251.6 406.7 1265.6 406.7 C1279.6 406.7 1279.6 432.9 1293.7 432.9 C1307.7 432.9 1307.7 488.3 1321.7 488.3 C1335.8 488.3 1335.8 534.6 1349.8 534.6 C1363.8 534.6 1363.8 370.9 1377.9 370.9 C1391.9 370.9 1391.9 372.6 1405.9 372.6 C1420.0 372.6 1420.0 375.1 1434.0 375.1 C1448.0 375.1 1448.0 361.8 1462.1 361.8 C1476.1 361.8 1476.1 371.2 1490.1 371.2 C1504.2 371.2 1504.2 357.0 1518.2 357.0 C1532.2 357.0 1532.2 403.7 1546.3 403.7 C1560.3 403.7 1560.3 425.3 1574.3 425.3 C1588.4 425.3 1588.4 431.2 1602.4 431.2 C1616.4 431.2 1616.4 421.6 1630.5 421.6 C1644.5 421.6 1644.5 480.5 1658.5 480.5 C1672.6 480.5 1672.6 463.8 1686.6 463.8 C1700.6 463.8 1700.6 468.8 1714.7 468.8 C1728.7 468.8 1728.7 422.8 1742.7 422.8 C1756.8 422.8 1756.8 489.8 1770.8 489.8 C1784.8 489.8 1784.8 534.6 1798.9 534.6 C1812.9 534.6 1812.9 452.1 1826.9 452.1 C1841.0 452.1 1841.0 331.5 1855.0 331.5" stroke="#330099"/>
<path d="M592.0 655.5 C606.0 655.5 606.0 486.5 620.1 486.5 C634.1 486.5 634.1 457.0 648.1 457.0 C662.2 457.0 662.2 430.2 676.2 430.2 C690.2 430.2 690.2 390.4 704.3 390.4 C718.3 390.4 718.3 351.0 732.3 351.0 C746.4 351.0 746.4 458.3 760.4 458.3 C774.4 458.3 774.4 386.4 788.5 386.4 C802.5 386.4 802.5 407.4 816.5 407.4 C830.6 407.4 830.6 431.2 844.6 431.2 C858.6 431.2 858.6 329.5 872.7 329.5 C886.7 329.5 886.7 385.9 900.7 385.9 C914.8 385.9 914.8 325.8 928.8 325.8 C942.8 325.8 942.8 382.1 956.9 382.1 C970.9 382.1 970.9 425.4 984.9 425.4 C999.0 425.4 999.0 406.4 1013.0 406.4 C1027.0 406.4 1027.0 386.5 1041.1 386.5 C1055.1 386.5 1055.1 412.6 1069.1 412.6 C1083.2 412.6 1083.2 509.4 1097.2 509.4 C1111.2 509.4 1111.2 483.2 1125.3 483.2 C1139.3 483.2 1139.3 463.7 1153.3 463.7 C1167.4 463.7 1167.4 492.3 1181.4 492.3 C1195.4 492.3 1195.4 383.9 1209.5 383.9 C1223.5 383.9 1223.5 416.3 1237.5 416.3 C1251.6 416.3 1251.6 438.7 1265.6 438.7 C1279.6 438.7 1279.6 446.0 1293.7 446.0 C1307.7 446.0 1307.7 469.8 1321.7 469.8 C1335.8 469.8 1335.8 523.3 1349.8 523.3 C1363.8 523.3 1363.8 450.9 1377.9 450.9 C1391.9 450.9 1391.9 426.5 1405.9 426.5 C1420.0 426.5 1420.0 448.5 1434.0 448.5 C1448.0 448.5 1448.0 442.2 1462.1 442.2 C1476.1 442.2 1476.1 493.3 1490.1 493.3 C1504.2 493.3 1504.2 438.9 1518.2 438.9 C1532.2 438.9 1532.2 464.9 1546.3 464.9 C1560.3 464.9 1560.3 437.6 1574.3 437.6 C1588.4 437.6 1588.4 516.4 1602.4 516.4 C1616.4 516.4 1616.4 471.0 1630.5 471.0 C1644.5 471.0 1644.5 440.6 1658.5 440.6 C1672.6 440.6 1672.6 485.0 1686.6 485.0 C1700.6 485.0 1700.6 353.4 1714.7 353.4 C1728.7 353.4 1728.7 392.3 1742.7 392.3 C1756.8 392.3 1756.8 447.5 1770.8 447.5 C1784.8 447.5 1784.8 500.9 1798.9 500.9 C1812.9 500.9 1812.9 354.2 1826.9 354.2 C1841.0 354.2 1841.0 302.8 1855.0 302.8" stroke="#cc0066"/>
<path d="M592.0 648.1 C606.0 648.1 606.0 377.4 620.1 377.4 C634.1 377.4 634.1 423.9 648.1 423.9 C662.2 423.9 662.2 400.3 676.2 400.3 C690.2 400.3 690.2 435.6 704.3 435.6 C718.3 435.6 718.3 481.4 732.3 481.4 C746.4 481.4 746.4 504.5 760.4 504.5 C774.4 504.5 774.4 498.6 788.5 498.6 C802.5 498.6 802.5 462.8 816.5 462.8 C830.6 462.8 830.6 472.6 844.6 472.6 C858.6 472.6 858.6 449.6 872.7 449.6 C886.7 449.6 886.7 322.2 900.7 322.2 C914.8 322.2 914.8 315.1 928.8 315.1 C942.8 315.1 942.8 460.6 956.9 460.6 C970.9 460.6 970.9 407.3 984.9 407.3 C999.0 407.3 999.0 414.1 1013.0 414.1 C1027.0 414.1 1027.0 426.9 1041.1 426.9 C1055.1 426.9 1055.1 383.9 1069.1 383.9 C1083.2 383.9 1083.2 420.0 1097.2 420.0 C1111.2 420.0 1111.2 437.7 1125.3 437.7 C1139.3 437.7 1139.3 448.6 1153.3 448.6 C1167.4 448.6 1167.4 442.6 1181.4 442.6 C1195.4 442.6 1195.4 381.7 1209.5 381.7 C1223.5 381.7 1223.5 372.5 1237.5 372.5 C1251.6 372.5 1251.6 456.4 1265.6 456.4 C1279.6 456.4 1279.6 460.8 1293.7 460.8 C1307.7 460.8 1307.7 477.8 1321.7 477.8 C1335.8 477.8 1335.8 460.7 1349.8 460.7 C1363.8 460.7 1363.8 414.2 1377.9 414.2 C1391.9 414.2 1391.9 384.0 1405.9 384.0 C1420.0 384.0 1420.0 408.7 1434.0 408.7 C1448.0 408.7 1448.0 498.2 1462.1 498.2 C1476.1 498.2 1476.1 444.4 1490.1 444.4 C1504.2 444.4 1504.2 426.8 1518.2 426.8 C1532.2 426.8 1532.2 406.3 1546.3 406.3 C1560.3 406.3 1560.3 471.7 1574.3 471.7 C1588.4 471.7 1588.4 492.1 1602.4 492.1 C1616.4 492.1 1616.4 466.1 1630.5 466.1 C1644.5 466.1 1644.5 475.9 1658.5 475.9 C1672.6 475.9 1672.6 437.3 1686.6 437.3 C1700.6 437.3 1700.6 418.0 1714.7 418.0 C1728.7 418.0 1728.7 460.4 1742.7 460.4 C1756.8 460.4 1756.8 534.6 1770.8 534.6 C1784.8 534.6 1784.8 534.6 1798.9 534.6 C1812.9 534.6 1812.9 462.9 1826.9 462.9 C1841.0 462.9 1841.0 354.9 1855.0 354.9" stroke="#00ffcc"/>
<path d="M592.0 648.7 C606.0 648.7 606.0 324.5 620.1 324.5 C634.1 324.5 634.1 412.4 648.1 412.4 C662.2 412.4 662.2 402.7 676.2 402.7 C690.2 402.7 690.2 345.5 704.3 345.5 C718.3 345.5 718.3 338.0 732.3 338.0 C746.4 338.0 746.4 367.8 760.4 367.8 C774.4 367.8 774.4 389.8 788.5 389.8 C802.5 389.8 802.5 453.3 816.5 453.3 C830.6 453.3 830.6 459.6 844.6 459.6 C858.6 459.6 858.6 457.8 872.7 457.8 C886.7 457.8 886.7 475.4 900.7 475.4 C914.8 475.4 914.8 449.1 928.8 449.1 C942.8 449.1 942.8 500.7 956.9 500.7 C970.9 500.7 970.9 427.6 984.9 427.6 C999.0 427.6 999.0 367.9 1013.0 367.9 C1027.0 367.9 1027.0 367.1 1041.1 367.1 C1055.1 367.1 1055.1 380.2 1069.1 380.2 C1083.2 380.2 1083.2 414.2 1097.2 414.2 C1111.2 414.2 1111.2 484.8 1125.3 484.8 C1139.3 484.8 1139.3 461.2 1153.3 461.2 C1167.4 461.2 1167.4 422.0 1181.4 422.0 C1195.4 422.0 1195.4 467.3 1209.5 467.3 C1223.5 467.3 1223.5 395.3 1237.5 395.3 C1251.6 395.3 1251.6 425.7 1265.6 425.7 C1279.6 425.7 1279.6 411.4 1293.7 411.4 C1307.7 411.4 1307.7 433.5 1321.7 433.5 C1335.8 433.5 1335.8 525.2 1349.8 525.2 C1363.8 525.2 1363.8 369.3 1377.9 369.3 C1391.9 369.3 1391.9 447.3 1405.9 447.3 C1420.0 447.3 1420.0 399.4 1434.0 399.4 C1448.0 399.4 1448.0 437.0 1462.1 437.0 C1476.1 437.0 1476.1 420.9 1490.1 420.9 C1504.2 420.9 1504.2 458.3 1518.2 458.3 C1532.2 458.3 1532.2 460.6 1546.3 460.6 C1560.3 460.6 1560.3 405.9 1574.3 405.9 C1588.4 405.9 1588.4 381.3 1602.4 381.3 C1616.4 381.3 1616.4 417.4 1630.5 417.4 C1644.5 417.4 1644.5 422.4 1658.5 422.4 C1672.6 422.4 1672.6 385.7 1686.6 385.7 C1700.6 385.7 1700.6 433.3 1714.7 433.3 C1728.7 433.3 1728.7 401.1 1742.7 401.1 C1756.8 401.1 1756.8 481.6 1770.8 481.6 C1784.8 481.6 1784.8 462.0 1798.9 462.0 C1812.9 462.0 1812.9 383.1 1826.9 383.1 C1841.0 383.1 1841.0 311.3 1855.0 311.3" stroke="#ffcc99"/>
<path d="M592.0 647.9 C606.0 647.9 606.0 392.5 620.1 392.5 C634.1 392.5 634.1 382.6 648.1 382.6 C662.2 382.6 662.2 451.4 676.2 451.4 C690.2 451.4 690.2 408.4 704.3 408.4 C718.3 408.4 718.3 355.2 732.3 355.2 C746.4 355.2 746.4 366.8 760.4 366.8 C774.4 366.8 774.4 420.6 788.5 420.6 C802.5 420.6 802.5 374.6 816.5 374.6 C830.6 374.6 830.6 394.4 844.6 394.4 C858.6 394.4 858.6 463.3 872.7 463.3 C886.7 463.3 886.7 460.6 900.7 460.6 C914.8 460.6 914.8 385.1 928.8 385.1 C942.8 385.1 942.8 464.9 956.9 464.9 C970.9 464.9 970.9 418.7 984.9 418.7 C999.0 418.7 999.0 437.8 1013.0 437.8 C1027.0 437.8 1027.0 503.5 1041.1 503.5 C1055.1 503.5 1055.1 487.2 1069.1 487.2 C1083.2 487.2 1083.2 442.8 1097.2 442.8 C1111.2 442.8 1111.2 426.8 1125.3 426.8 C1139.3 426.8 1139.3 434.8 1153.3 434.8 C1167.4 434.8 1167.4 508.2 1181.4 508.2 C1195.4 508.2 1195.4 417.1 1209.5 417.1 C1223.5 417.1 1223.5 392.6 1237.5 392.6 C1251.6 392.6 1251.6 367.6 1265.6 367.6 C1279.6 367.6 1279.6 343.5 1293.7 343.5 C1307.7 343.5 1307.7 404.5 1321.7 404.5 C1335.8 404.5 1335.8 483.4 1349.8 483.4 C1363.8 483.4 1363.8 421.8 1377.9 421.8 C1391.9 421.8 1391.9 355.0 1405.9 355.0 C1420.0 355.0 1420.0 462.1 1434.0 462.1 C1448.0 462.1 1448.0 454.7 1462.1 454.7 C1476.1 454.7 1476.1 471.4 1490.1 471.4 C1504.2 471.4 1504.2 426.4 1518.2 426.4 C1532.2 426.4 1532.2 366.1 1546.3 366.1 C1560.3 366.1 1560.3 409.5 1574.3 409.5 C1588.4 409.5 1588.4 516.3 1602.4 516.3 C1616.4 516.3 1616.4 447.4 1630.5 447.4 C1644.5 447.4 1644.5 449.7 1658.5 449.7 C1672.6 449.7 1672.6 503.5 1686.6 503.5 C1700.6 503.5 1700.6 428.8 1714.7 428.8 C1728.7 428.8 1728.7 450.4 1742.7 450.4 C1756.8 450.4 1756.8 444.9 1770.8 444.9 C1784.8 444.9 1784.8 523.9 1798.9 523.9 C1812.9 523.9 1812.9 386.5 1826.9 386.5 C1841.0 386.5 1841.0 423.9 1855.0 423.9" stroke="#339999"/>
</g>
<rect x="172" y="730" width="64" height="44" fill="#723100" />
<rect x="174" y="732" width="60" height="40" fill="#ffaf72" />
<rect x="176" y="734" width="56" height="36" fill="#ff6e00" />
<text x="250" y="766" font-size="38" fill="#1e1e1e" textLength="210" lengthAdjust="spacingAndGlyphs" >CPU1 69,1%</text>
<rect x="598" y="730" width="64" height="44" fill="#5a0512" />
<rect x="600" y="732" width="60" height="40" fill="#e07988" />
<rect x="602" y="734" width="56" height="36" fill="#c80d28" />
<text x="676" y="766" font-size="38" fill="#1e1e1e" textLength="211" lengthAdjust="spacingAndGlyphs" >CPU2 78,8%</text>
<rect x="1024" y="730" width="64" height="44" fill="#234b1a" />
<rect x="1026" y="732" width="60" height="40" fill="#9dcf92" />
<rect x="1028" y="734" width="56" height="36" fill="#4ea83a" />
<text x="1102" y="766" font-size="38" fill="#1e1e1e" textLength="210" lengthAdjust="spacingAndGlyphs" >CPU3 90,9%</text>
<rect x="1450" y="730" width="64" height="44" fill="#143751" />
<rect x="1452" y="732" width="60" height="40" fill="#8cb6d6" />
<rect x="1454" y="734" width="56" height="36" fill="#2e7bb5" />
<text x="1528" y="766" font-size="38" fill="#1e1e1e" textLength="210" lengthAdjust="spacingAndGlyphs" >CPU4 69,0%</text>
<rect x="172" y="786" width="64" height="44" fill="#722d00" />
<rect x="174" y="788" width="60" height="40" fill="#ffaa72" />
<rect x="176" y="790" width="56" height="36" fill="#ff6600" />
<text x="250" y="822" font-size="38" fill="#1e1e1e" textLength="210" lengthAdjust="spacingAndGlyphs" >CPU5 99,0%</text>
<rect x="598" y="786" width="64" height="44" fill="#2f005b" />
<rect x="600" y="788" width="60" height="40" fill="#ad72e2" />
<rect x="602" y="790" width="56" height="36" fill="#6a00cc" />
<text x="676" y="822" font-size="38" fill="#1e1e1e" textLength="211" lengthAdjust="spacingAndGlyphs" >CPU6 92,9%</text>
<rect x="1024" y="786" width="64" height="44" fill="#440000" />
<rect x="1026" y="788" width="60" height="40" fill="#c67272" />
<rect x="1028" y="790" width="56" height="36" fill="#990000" />
<text x="1102" y="822" font-size="38" fill="#1e1e1e" textLength="210" lengthAdjust="spacingAndGlyphs" >CPU7 78,1%</text>
<rect x="1450" y="786" width="64" height="44" fill="#000044" />
<rect x="1452" y="788" width="60" height="40" fill="#7272c6" />
<rect x="1454" y="790" width="56" height="36" fill="#000099" />
<text x="1528" y="822" font-size="38" fill="#1e1e1e" textLength="210" lengthAdjust="spacingAndGlyphs" >CPU8 84,3%</text>
<rect x="172" y="842" width="64" height="44" fill="#725b00" />
<rect x="174" y="844" width="60" height="40" fill="#ffe272" />
<rect x="176" y="846" width="56" height="36" fill="#ffcc00" />
<text x="250" y="878" font-size="38" fill="#1e1e1e" textLength="210" lengthAdjust="spacingAndGlyphs" >CPU9 86,1%</text>
<rect x="598" y="842" width="64" height="44" fill="#004000" />
<rect x="600" y="844" width="60" height="40" fill="#72c172" />
<rect x="602" y="846" width="56" height="36" fill="#009000" />
<text x="676" y="878" font-size="38" fill="#1e1e1e" textLength="232" lengthAdjust="spacingAndGlyphs" >CPU10 80,8%</text>
<rect x="1024" y="842" width="64" height="44" fill="#5b2d00" />
<rect x="1026" y="844" width="60" height="40" fill="#e2aa72" />
<rect x="1028" y="846" width="56" height="36" fill="#cc6600" />
<text x="1102" y="878" font-size="38" fill="#1e1e1e" textLength="231" lengthAdjust="spacingAndGlyphs" >CPU11 70,3%</text>
<rect x="1450" y="842" width="64" height="44" fill="#160044" />
<rect x="1452" y="844" width="60" height="40" fill="#8e72c6" />
<rect x="1454" y="846" width="56" height="36" fill="#330099" />
<text x="1528" y="878" font-size="38" fill="#1e1e1e" textLength="231" lengthAdjust="spacingAndGlyphs" >CPU12 63,4%</text>
<rect x="172" y="898" width="64" height="44" fill="#5b002d" />
<rect x="174" y="900" width="60" height="40" fill="#e272aa" />
<rect x="176" y="902" width="56" height="36" fill="#cc0066" />
<text x="250" y="934" font-size="38" fill="#1e1e1e" textLength="231" lengthAdjust="spacingAndGlyphs" >CPU13 67,0%</text>
<rect x="598" y="898" width="64" height="44" fill="#00725b" />
<rect x="600" y="900" width="60" height="40" fill="#72ffe2" />
<rect x="602" y="902" width="56" height="36" fill="#00ffcc" />
<text x="676" y="934" font-size="38" fill="#1e1e1e" textLength="253" lengthAdjust="spacingAndGlyphs" >CPU14 100,0%</text>
<rect x="1024" y="898" width="64" height="44" fill="#725b44" />
<rect x="1026" y="900" width="60" height="40" fill="#ffe2c6" />
<rect x="1028" y="902" width="56" height="36" fill="#ffcc99" />
<text x="1102" y="934" font-size="38" fill="#1e1e1e" textLength="231" lengthAdjust="spacingAndGlyphs" >CPU15 84,7%</text>
<rect x="1450" y="898" width="64" height="44" fill="#164444" />
<rect x="1452" y="900" width="60" height="40" fill="#8ec6c6" />
<rect x="1454" y="902" width="56" height="36" fill="#339999" />
<text x="1528" y="934" font-size="38" fill="#1e1e1e" textLength="231" lengthAdjust="spacingAndGlyphs" >CPU16 76,8%</text>
<text x="59" y="1014" font-size="38" fill="#1e1e1e" font-weight="bold" textLength="1231" lengthAdjust="spacingAndGlyphs" >Historique d'utilisation de la mémoire physique et du fichier d'échange</text>
<rect x="164" y="1118" width="1691" height="2" fill="#dfdfdf" />
<rect x="164" y="1194" width="1691" height="2" fill="#dfdfdf" />
<rect x="164" y="1270" width="1691" height="2" fill="#dfdfdf" />
<rect x="164" y="1346" width="1691" height="2" fill="#dfdfdf" />
<rect x="450.6666666666667" y="1043" width="2" height="387" fill="#dfdfdf" />
<rect x="731.3333333333334" y="1043" width="2" height="387" fill="#dfdfdf" />
<rect x="1012.0" y="1043" width="2" height="387" fill="#dfdfdf" />
<rect x="1292.6666666666667" y="1043" width="2" height="387" fill="#dfdfdf" />
<rect x="1573.3333333333333" y="1043" width="2" height="387" fill="#dfdfdf" />
<rect x="164" y="1042" width="1692" height="2" fill="#a9aba9" />
<rect x="164" y="1422" width="1692" height="2" fill="#a9aba9" />
<rect x="170" y="1042" width="2" height="388" fill="#aaaaaa" />
<rect x="1854" y="1042" width="2" height="388" fill="#aaaaaa" />
<text x="154" y="1058" font-size="16" fill="#1e1e1e" text-anchor="end" >100%</text>
<text x="154" y="1134" font-size="16" fill="#1e1e1e" text-anchor="end" >80%</text>
<text x="154" y="1210" font-size="16" fill="#1e1e1e" text-anchor="end" >60%</text>
<text x="154" y="1286" font-size="16" fill="#1e1e1e" text-anchor="end" >40%</text>
<text x="154" y="1362" font-size="16" fill="#1e1e1e" text-anchor="end" >20%</text>
<text x="154" y="1430" font-size="16" fill="#1e1e1e" text-anchor="end" >0%</text>
<text x="171.0" y="1450" font-size="16" fill="#1e1e1e" text-anchor="middle" >60 secondes</text>
<text x="451.6666666666667" y="1450" font-size="16" fill="#1e1e1e" text-anchor="middle" >50</text>
<text x="732.3333333333334" y="1450" font-size="16" fill="#1e1e1e" text-anchor="middle" >40</text>
<text x="1013.0" y="1450" font-size="16" fill="#1e1e1e" text-anchor="middle" >30</text>
<text x="1293.6666666666667" y="1450" font-size="16" fill="#1e1e1e" text-anchor="middle" >20</text>
<text x="1574.3333333333333" y="1450" font-size="16" fill="#1e1e1e" text-anchor="middle" >10</text>
<text x="1855.0" y="1450" font-size="16" fill="#1e1e1e" text-anchor="middle" >0</text>
<path d="M592.0 1149.0 C606.0 1149.0 606.0 1148.5 620.1 1148.5 C634.1 1148.5 634.1 1148.1 648.1 1148.1 C662.2 1148.1 662.2 1147.8 676.2 1147.8 C690.2 1147.8 690.2 1147.7 704.3 1147.7 C718.3 1147.7 718.3 1147.8 732.3 1147.8 C746.4 1147.8 746.4 1148.0 760.4 1148.0 C774.4 1148.0 774.4 1148.4 788.5 1148.4 C802.5 1148.4 802.5 1148.8 816.5 1148.8 C830.6 1148.8 830.6 1149.2 844.6 1149.2 C858.6 1149.2 858.6 1149.5 872.7 1149.5 C886.7 1149.5 886.7 1149.7 900.7 1149.7 C914.8 1149.7 914.8 1149.7 928.8 1149.7 C942.8 1149.7 942.8 1149.5 956.9 1149.5 C970.9 1149.5 970.9 1149.2 984.9 1149.2 C999.0 1149.2 999.0 1148.8 1013.0 1148.8 C1027.0 1148.8 1027.0 1148.3 1041.1 1148.3 C1055.1 1148.3 1055.1 1147.8 1069.1 1147.8 C1083.2 1147.8 1083.2 1147.4 1097.2 1147.4 C1111.2 1147.4 1111.2 1147.2 1125.3 1147.2 C1139.3 1147.2 1139.3 1147.1 1153.3 1147.1 C1167.4 1147.1 1167.4 1147.2 1181.4 1147.2 C1195.4 1147.2 1195.4 1147.5 1209.5 1147.5 C1223.5 1147.5 1223.5 1147.9 1237.5 1147.9 C1251.6 1147.9 1251.6 1148.3 1265.6 1148.3 C1279.6 1148.3 1279.6 1148.7 1293.7 1148.7 C1307.7 1148.7 1307.7 1149.0 1321.7 1149.0 C1335.8 1149.0 1335.8 1149.1 1349.8 1149.1 C1363.8 1149.1 1363.8 1149.1 1377.9 1149.1 C1391.9 1149.1 1391.9 1148.9 1405.9 1148.9 C1420.0 1148.9 1420.0 1148.5 1434.0 1148.5 C1448.0 1148.5 1448.0 1148.0 1462.1 1148.0 C1476.1 1148.0 1476.1 1147.5 1490.1 1147.5 C1504.2 1147.5 1504.2 1147.1 1518.2 1147.1 C1532.2 1147.1 1532.2 1146.7 1546.3 1146.7 C1560.3 1146.7 1560.3 1146.6 1574.3 1146.6 C1588.4 1146.6 1588.4 1146.6 1602.4 1146.6 C1616.4 1146.6 1616.4 1146.7 1630.5 1146.7 C1644.5 1146.7 1644.5 1147.0 1658.5 1147.0 C1672.6 1147.0 1672.6 1147.4 1686.6 1147.4 C1700.6 1147.4 1700.6 1147.8 1714.7 1147.8 C1728.7 1147.8 1728.7 1148.2 1742.7 1148.2 C1756.8 1148.2 1756.8 1148.4 1770.8 1148.4 C1784.8 1148.4 1784.8 1148.5 1798.9 1148.5 C1812.9 1148.5 1812.9 1146.1 1826.9 1146.1 C1841.0 1146.1 1841.0 1145.9 1855.0 1145.9" fill="none" stroke="#b0174f" stroke-width="2"/>
<path d="M592.0 1397.2 C606.0 1397.2 606.0 1397.2 620.1 1397.2 C634.1 1397.2 634.1 1397.2 648.1 1397.2 C662.2 1397.2 662.2 1394.1 676.2 1394.1 C690.2 1394.1 690.2 1394.1 704.3 1394.1 C718.3 1394.1 718.3 1394.1 732.3 1394.1 C746.4 1394.1 746.4 1394.1 760.4 1394.1 C774.4 1394.1 774.4 1394.1 788.5 1394.1 C802.5 1394.1 802.5 1394.1 816.5 1394.1 C830.6 1394.1 830.6 1394.1 844.6 1394.1 C858.6 1394.1 858.6 1394.1 872.7 1394.1 C886.7 1394.1 886.7 1390.3 900.7 1390.3 C914.8 1390.3 914.8 1390.3 928.8 1390.3 C942.8 1390.3 942.8 1390.3 956.9 1390.3 C970.9 1390.3 970.9 1390.3 984.9 1390.3 C999.0 1390.3 999.0 1390.3 1013.0 1390.3 C1027.0 1390.3 1027.0 1387.3 1041.1 1387.3 C1055.1 1387.3 1055.1 1387.3 1069.1 1387.3 C1083.2 1387.3 1083.2 1387.3 1097.2 1387.3 C1111.2 1387.3 1111.2 1387.3 1125.3 1387.3 C1139.3 1387.3 1139.3 1387.3 1153.3 1387.3 C1167.4 1387.3 1167.4 1387.3 1181.4 1387.3 C1195.4 1387.3 1195.4 1387.3 1209.5 1387.3 C1223.5 1387.3 1223.5 1387.3 1237.5 1387.3 C1251.6 1387.3 1251.6 1387.3 1265.6 1387.3 C1279.6 1387.3 1279.6 1387.3 1293.7 1387.3 C1307.7 1387.3 1307.7 1387.3 1321.7 1387.3 C1335.8 1387.3 1335.8 1387.3 1349.8 1387.3 C1363.8 1387.3 1363.8 1387.3 1377.9 1387.3 C1391.9 1387.3 1391.9 1387.3 1405.9 1387.3 C1420.0 1387.3 1420.0 1387.3 1434.0 1387.3 C1448.0 1387.3 1448.0 1387.3 1462.1 1387.3 C1476.1 1387.3 1476.1 1387.3 1490.1 1387.3 C1504.2 1387.3 1504.2 1387.3 1518.2 1387.3 C1532.2 1387.3 1532.2 1387.3 1546.3 1387.3 C1560.3 1387.3 1560.3 1387.3 1574.3 1387.3 C1588.4 1387.3 1588.4 1387.3 1602.4 1387.3 C1616.4 1387.3 1616.4 1387.3 1630.5 1387.3 C1644.5 1387.3 1644.5 1386.5 1658.5 1386.5 C1672.6 1386.5 1672.6 1386.5 1686.6 1386.5 C1700.6 1386.5 1700.6 1386.5 1714.7 1386.5 C1728.7 1386.5 1728.7 1386.5 1742.7 1386.5 C1756.8 1386.5 1756.8 1386.5 1770.8 1386.5 C1784.8 1386.5 1784.8 1386.5 1798.9 1386.5 C1812.9 1386.5 1812.9 1379.7 1826.9 1379.7 C1841.0 1379.7 1841.0 1379.7 1855.0 1379.7" fill="none" stroke="#4aa033" stroke-width="2"/>
<circle cx="199" cy="1525" r="28.5" fill="#ffffff" stroke="#c8c8c8" stroke-width="2"/>
<path d="M199 1498 A27 27 0 1 1 172.42 1529.73 L190.63 1526.49 A8.5 8.5 0 0 1 199 1516.5 Z" fill="#b0174f" stroke="#1e1e1e" stroke-width="1.6" stroke-linejoin="round"/>
<path d="M199.0 1501.2 A23.8 23.8 0 1 1 175.86 1530.56" fill="none" stroke="#e07aa0" stroke-width="1.4"/>
<path d="M193.41 1523.12 A5.9 5.9 0 0 1 196.17 1519.82" fill="none" stroke="#e07aa0" stroke-width="1.4"/>
<text x="244" y="1509" font-size="38" fill="#1e1e1e" textLength="148" lengthAdjust="spacingAndGlyphs" >Mémoire</text>
<text x="244" y="1566" font-size="38" fill="#1e1e1e" textLength="482" lengthAdjust="spacingAndGlyphs" >10,9 GiB (72,2%) de 15,0 GiB</text>
<circle cx="1055" cy="1525" r="28.5" fill="#ffffff" stroke="#c8c8c8" stroke-width="2"/>
<path d="M1055 1498 A27 27 0 0 1 1072.73 1504.64 L1060.58 1518.59 A8.5 8.5 0 1 1 1055 1516.5 Z" fill="#4aa933" stroke="#1e1e1e" stroke-width="1.6" stroke-linejoin="round"/>
<path d="M1055.0 1501.2 A23.8 23.8 0 0 1 1069.52 1506.14" fill="none" stroke="#a8dc98" stroke-width="1.4"/>
<path d="M1060.53 1522.95 A5.9 5.9 0 1 1 1052.17 1519.82" fill="none" stroke="#a8dc98" stroke-width="1.4"/>
<text x="1099" y="1509" font-size="38" fill="#1e1e1e" textLength="90" lengthAdjust="spacingAndGlyphs" >Swap</text>
<text x="1099" y="1566" font-size="38" fill="#1e1e1e" textLength="490" lengthAdjust="spacingAndGlyphs" >217,8 MiB (11,4%) de 1,9 GiB</text>
<text x="59" y="1646" font-size="38" fill="#1e1e1e" font-weight="bold" textLength="468" lengthAdjust="spacingAndGlyphs" >Historique du trafic réseau</text>
<rect x="164" y="1750" width="1691" height="2" fill="#dfdfdf" />
<rect x="164" y="1826" width="1691" height="2" fill="#dfdfdf" />
<rect x="164" y="1902" width="1691" height="2" fill="#dfdfdf" />
<rect x="164" y="1978" width="1691" height="2" fill="#dfdfdf" />
<rect x="450.6666666666667" y="1675" width="2" height="387" fill="#dfdfdf" />
<rect x="731.3333333333334" y="1675" width="2" height="387" fill="#dfdfdf" />
<rect x="1012.0" y="1675" width="2" height="387" fill="#dfdfdf" />
<rect x="1292.6666666666667" y="1675" width="2" height="387" fill="#dfdfdf" />
<rect x="1573.3333333333333" y="1675" width="2" height="387" fill="#dfdfdf" />
<rect x="164" y="1674" width="1692" height="2" fill="#a9aba9" />
<rect x="164" y="2054" width="1692" height="2" fill="#a9aba9" />
<rect x="170" y="1674" width="2" height="388" fill="#aaaaaa" />
<rect x="1854" y="1674" width="2" height="388" fill="#aaaaaa" />
<text x="154" y="1690" font-size="16" fill="#1e1e1e" text-anchor="end" >30,7 kB</text>
<text x="154" y="1766" font-size="16" fill="#1e1e1e" text-anchor="end" >24,6 kB</text>
<text x="154" y="1842" font-size="16" fill="#1e1e1e" text-anchor="end" >18,4 kB</text>
<text x="154" y="1918" font-size="16" fill="#1e1e1e" text-anchor="end" >12,3 kB</text>
<text x="154" y="1994" font-size="16" fill="#1e1e1e" text-anchor="end" >6,1 kB</text>
<text x="154" y="2062" font-size="16" fill="#1e1e1e" text-anchor="end" >0 octet</text>
<text x="171.0" y="2082" font-size="16" fill="#1e1e1e" text-anchor="middle" >60 secondes</text>
<text x="451.6666666666667" y="2082" font-size="16" fill="#1e1e1e" text-anchor="middle" >50</text>
<text x="732.3333333333334" y="2082" font-size="16" fill="#1e1e1e" text-anchor="middle" >40</text>
<text x="1013.0" y="2082" font-size="16" fill="#1e1e1e" text-anchor="middle" >30</text>
<text x="1293.6666666666667" y="2082" font-size="16" fill="#1e1e1e" text-anchor="middle" >20</text>
<text x="1574.3333333333333" y="2082" font-size="16" fill="#1e1e1e" text-anchor="middle" >10</text>
<text x="1855.0" y="2082" font-size="16" fill="#1e1e1e" text-anchor="middle" >0</text>
<path d="M592.0 2055.0 C606.0 2055.0 606.0 2025.3 620.1 2025.3 C634.1 2025.3 634.1 2051.3 648.1 2051.3 C662.2 2051.3 662.2 2051.3 676.2 2051.3 C690.2 2051.3 690.2 2051.3 704.3 2051.3 C718.3 2051.3 718.3 2051.3 732.3 2051.3 C746.4 2051.3 746.4 2051.3 760.4 2051.3 C774.4 2051.3 774.4 2051.3 788.5 2051.3 C802.5 2051.3 802.5 2051.3 816.5 2051.3 C830.6 2051.3 830.6 2051.3 844.6 2051.3 C858.6 2051.3 858.6 2051.3 872.7 2051.3 C886.7 2051.3 886.7 2051.3 900.7 2051.3 C914.8 2051.3 914.8 2051.3 928.8 2051.3 C942.8 2051.3 942.8 2037.7 956.9 2037.7 C970.9 2037.7 970.9 2051.3 984.9 2051.3 C999.0 2051.3 999.0 2051.3 1013.0 2051.3 C1027.0 2051.3 1027.0 2036.4 1041.1 2036.4 C1055.1 2036.4 1055.1 2038.9 1069.1 2038.9 C1083.2 2038.9 1083.2 2050.0 1097.2 2050.0 C1111.2 2050.0 1111.2 2050.0 1125.3 2050.0 C1139.3 2050.0 1139.3 2051.3 1153.3 2051.3 C1167.4 2051.3 1167.4 2051.3 1181.4 2051.3 C1195.4 2051.3 1195.4 2051.3 1209.5 2051.3 C1223.5 2051.3 1223.5 2051.3 1237.5 2051.3 C1251.6 2051.3 1251.6 2051.3 1265.6 2051.3 C1279.6 2051.3 1279.6 2051.3 1293.7 2051.3 C1307.7 2051.3 1307.7 2051.3 1321.7 2051.3 C1335.8 2051.3 1335.8 2051.3 1349.8 2051.3 C1363.8 2051.3 1363.8 2038.9 1377.9 2038.9 C1391.9 2038.9 1391.9 2051.3 1405.9 2051.3 C1420.0 2051.3 1420.0 2051.3 1434.0 2051.3 C1448.0 2051.3 1448.0 2051.3 1462.1 2051.3 C1476.1 2051.3 1476.1 2051.3 1490.1 2051.3 C1504.2 2051.3 1504.2 2051.3 1518.2 2051.3 C1532.2 2051.3 1532.2 2051.3 1546.3 2051.3 C1560.3 2051.3 1560.3 2045.1 1574.3 2045.1 C1588.4 2045.1 1588.4 1980.7 1602.4 1980.7 C1616.4 1980.7 1616.4 1907.7 1630.5 1907.7 C1644.5 1907.7 1644.5 2051.3 1658.5 2051.3 C1672.6 2051.3 1672.6 2038.9 1686.6 2038.9 C1700.6 2038.9 1700.6 2051.3 1714.7 2051.3 C1728.7 2051.3 1728.7 2051.3 1742.7 2051.3 C1756.8 2051.3 1756.8 2051.3 1770.8 2051.3 C1784.8 2051.3 1784.8 2051.3 1798.9 2051.3 C1812.9 2051.3 1812.9 2051.3 1826.9 2051.3 C1841.0 2051.3 1841.0 2051.3 1855.0 2051.3" fill="none" stroke="#3a86c0" stroke-width="2.2"/>
<path d="M592.0 2055.0 C606.0 2055.0 606.0 1922.6 620.1 1922.6 C634.1 1922.6 634.1 2051.3 648.1 2051.3 C662.2 2051.3 662.2 2051.3 676.2 2051.3 C690.2 2051.3 690.2 2051.3 704.3 2051.3 C718.3 2051.3 718.3 2051.3 732.3 2051.3 C746.4 2051.3 746.4 2051.3 760.4 2051.3 C774.4 2051.3 774.4 2051.3 788.5 2051.3 C802.5 2051.3 802.5 2051.3 816.5 2051.3 C830.6 2051.3 830.6 2051.3 844.6 2051.3 C858.6 2051.3 858.6 2051.3 872.7 2051.3 C886.7 2051.3 886.7 2051.3 900.7 2051.3 C914.8 2051.3 914.8 2051.3 928.8 2051.3 C942.8 2051.3 942.8 1985.7 956.9 1985.7 C970.9 1985.7 970.9 2051.3 984.9 2051.3 C999.0 2051.3 999.0 2051.3 1013.0 2051.3 C1027.0 2051.3 1027.0 2035.2 1041.1 2035.2 C1055.1 2035.2 1055.1 2043.9 1069.1 2043.9 C1083.2 2043.9 1083.2 2051.3 1097.2 2051.3 C1111.2 2051.3 1111.2 2048.8 1125.3 2048.8 C1139.3 2048.8 1139.3 2051.3 1153.3 2051.3 C1167.4 2051.3 1167.4 2051.3 1181.4 2051.3 C1195.4 2051.3 1195.4 2051.3 1209.5 2051.3 C1223.5 2051.3 1223.5 2051.3 1237.5 2051.3 C1251.6 2051.3 1251.6 2051.3 1265.6 2051.3 C1279.6 2051.3 1279.6 2051.3 1293.7 2051.3 C1307.7 2051.3 1307.7 2051.3 1321.7 2051.3 C1335.8 2051.3 1335.8 2051.3 1349.8 2051.3 C1363.8 2051.3 1363.8 1988.2 1377.9 1988.2 C1391.9 1988.2 1391.9 2051.3 1405.9 2051.3 C1420.0 2051.3 1420.0 2051.3 1434.0 2051.3 C1448.0 2051.3 1448.0 2051.3 1462.1 2051.3 C1476.1 2051.3 1476.1 2051.3 1490.1 2051.3 C1504.2 2051.3 1504.2 2051.3 1518.2 2051.3 C1532.2 2051.3 1532.2 2051.3 1546.3 2051.3 C1560.3 2051.3 1560.3 2042.6 1574.3 2042.6 C1588.4 2042.6 1588.4 1869.3 1602.4 1869.3 C1616.4 1869.3 1616.4 1766.6 1630.5 1766.6 C1644.5 1766.6 1644.5 2051.3 1658.5 2051.3 C1672.6 2051.3 1672.6 1986.9 1686.6 1986.9 C1700.6 1986.9 1700.6 2051.3 1714.7 2051.3 C1728.7 2051.3 1728.7 2051.3 1742.7 2051.3 C1756.8 2051.3 1756.8 2051.3 1770.8 2051.3 C1784.8 2051.3 1784.8 2051.3 1798.9 2051.3 C1812.9 2051.3 1812.9 2051.3 1826.9 2051.3 C1841.0 2051.3 1841.0 2046.3 1855.0 2046.3" fill="none" stroke="#e8221a" stroke-width="2.2"/>
<ellipse cx="198" cy="2163" rx="28" ry="5" fill="#000" opacity="0.12"/>
<defs><linearGradient id="ab" x1="0" x2="1" y1="0" y2="1"><stop offset="0" stop-color="#7aaed4"/><stop offset="0.45" stop-color="#5d9ac8"/><stop offset="0.5" stop-color="#2f7db8"/><stop offset="1" stop-color="#2e7cb6"/></linearGradient><linearGradient id="ar" x1="0" x2="1" y1="0" y2="1"><stop offset="0" stop-color="#f87060"/><stop offset="0.45" stop-color="#f04a30"/><stop offset="0.5" stop-color="#e8220e"/><stop offset="1" stop-color="#dd1a08"/></linearGradient></defs>
<ellipse cx="198" cy="2162" rx="26" ry="4" fill="#000" opacity="0.08"/>
<path d="M182.5 2108.5 L213.5 2108.5 L213.5 2128.5 L227 2128.5 L198 2162 L169 2128.5 L182.5 2128.5 Z" fill="#2e7db8" stroke="#0e3050" stroke-width="2"/>
<path d="M185 2111 L211 2111 L211 2131 L222 2131 L198 2158.5 L174 2131 L185 2131 Z" fill="url(#ab)" stroke="#a8d0ee" stroke-width="1.6"/>
<text x="243" y="2142" font-size="38" fill="#1e1e1e" textLength="172" lengthAdjust="spacingAndGlyphs" >Réception</text>
<text x="243" y="2197" font-size="38" fill="#1e1e1e" textLength="168" lengthAdjust="spacingAndGlyphs" >Total reçu</text>
<text x="902" y="2142" font-size="38" fill="#1e1e1e" text-anchor="end" textLength="208" lengthAdjust="spacingAndGlyphs" >111 octets/s</text>
<text x="902" y="2197" font-size="38" fill="#1e1e1e" text-anchor="end" textLength="161" lengthAdjust="spacingAndGlyphs" >801,9 MB</text>
<ellipse cx="1042" cy="2163" rx="28" ry="5" fill="#000" opacity="0.12"/>
<path d="M1042 2107.5 L1071.5 2140.5 L1057.5 2140.5 L1057.5 2161 L1026.5 2161 L1026.5 2140.5 L1012.5 2140.5 Z" fill="#e8220e" stroke="#6a0c00" stroke-width="2"/>
<path d="M1042 2111 L1066 2138 L1055 2138 L1055 2158.5 L1029 2158.5 L1029 2138 L1018 2138 Z" fill="url(#ar)" stroke="#ff9a88" stroke-width="1.6"/>
<text x="1087" y="2142" font-size="38" fill="#1e1e1e" textLength="89" lengthAdjust="spacingAndGlyphs" >Envoi</text>
<text x="1087" y="2197" font-size="38" fill="#1e1e1e" textLength="212" lengthAdjust="spacingAndGlyphs" >Total envoyé</text>
<text x="1774" y="2142" font-size="38" fill="#1e1e1e" text-anchor="end" textLength="187" lengthAdjust="spacingAndGlyphs" >85 octets/s</text>
<text x="1774" y="2197" font-size="38" fill="#1e1e1e" text-anchor="end" textLength="139" lengthAdjust="spacingAndGlyphs" >43,5 MB</text>
<defs><clipPath id="appclip"><rect x="1920" y="0" width="1920" height="2400"/></clipPath></defs><g clip-path="url(#appclip)">
<rect x="1920" y="46" width="1920" height="2298" fill="#31363b" />
<defs><linearGradient id="tb2" x1="0" x2="1" y1="0" y2="0"><stop offset="0" stop-color="#a6a6a6"/><stop offset="0.5" stop-color="#cbbfca"/><stop offset="1" stop-color="#c4c4c4"/></linearGradient></defs>
<rect x="1920" y="0" width="1920" height="46" fill="url(#tb2)" />
<rect x="3736" y="8" width="32" height="28" fill="#555555" />
<rect x="3736" y="8" width="30" height="26" fill="#ffffff" />
<rect x="3738" y="10" width="28" height="24" fill="#d8d4ce" />
<rect x="3744" y="24" width="14" height="4" fill="#000" />
<rect x="3768" y="8" width="32" height="28" fill="#555555" />
<rect x="3768" y="8" width="30" height="26" fill="#ffffff" />
<rect x="3770" y="10" width="28" height="24" fill="#d8d4ce" />
<rect x="3781" y="14" width="10" height="10" fill="none" stroke="#000" stroke-width="2"/>
<rect x="3780" y="13" width="12" height="3" fill="#000" />
<rect x="3774" y="20" width="12" height="9" fill="#d8d4ce" stroke="#000" stroke-width="2"/>
<rect x="3773" y="19" width="14" height="3" fill="#000" />
<rect x="3804" y="8" width="32" height="28" fill="#555555" />
<rect x="3804" y="8" width="30" height="26" fill="#ffffff" />
<rect x="3806" y="10" width="28" height="24" fill="#d8d4ce" />
<path d="M3813 15 L3826 27 M3826 15 L3813 27" stroke="#000" stroke-width="3.2"/>
<rect x="2892" y="46" width="948" height="76" fill="#4d4d4d" />
<text x="2929" y="97" font-size="37" fill="#ffffff" font-style="italic" textLength="229" lengthAdjust="spacingAndGlyphs" stroke="#4d4d4d" stroke-width="1.1">Journalisation</text>
<text x="3207" y="97" font-size="37" fill="#ffffff" font-style="italic" textLength="144" lengthAdjust="spacingAndGlyphs" stroke="#4d4d4d" stroke-width="1.1">Montage</text>
<text x="3400" y="97" font-size="37" fill="#ffffff" font-style="italic" textLength="92" lengthAdjust="spacingAndGlyphs" stroke="#4d4d4d" stroke-width="1.1">Audio</text>
<text x="3540" y="97" font-size="37" fill="#ffffff" font-style="italic" textLength="94" lengthAdjust="spacingAndGlyphs" stroke="#4d4d4d" stroke-width="1.1">Effets</text>
<text x="3683" y="97" font-size="37" fill="#ffffff" font-style="italic" textLength="123" lengthAdjust="spacingAndGlyphs" stroke="#4d4d4d" stroke-width="1.1">Couleur</text>
<rect x="1920" y="122" width="124" height="434" fill="#31363b" />
<circle cx="2010" cy="154" r="15" fill="none" stroke="#ffffff" stroke-width="2"/>
<rect x="2008" y="148" width="4" height="14" fill="#ffffff" />
<rect x="2008" y="141" width="4" height="4" fill="#ffffff" />
<rect x="1912" y="191" width="130" height="62" rx="3" fill="#212528" stroke="#5a5f64" stroke-width="2"/>
<rect x="1912" y="257" width="130" height="320" rx="3" fill="#222629" stroke="#5a5f64" stroke-width="2"/>
<rect x="2044" y="124" width="2" height="432" fill="#5a5f64" />
<rect x="2052" y="122" width="1000" height="434" fill="#555555" />
<rect x="2052" y="123" width="2" height="433" fill="#6a6e72" />
<rect x="2054" y="298" width="998" height="258" fill="#000000" />
<defs><pattern id="vid" x="2213" y="316" width="34" height="23" patternUnits="userSpaceOnUse"><rect width="34" height="23" fill="#341806"/><rect x="0" y="3" width="34" height="4" fill="#d8bc00"/><rect x="4" y="3.5" width="9" height="3" fill="#fff070"/><rect x="13" y="0.5" width="9" height="4" fill="#a070e0"/><rect x="23" y="6" width="8" height="3" fill="#f0c0e8"/><rect x="18" y="8.5" width="9" height="3" fill="#3010b0"/><rect x="1" y="8" width="6" height="2.5" fill="#40a030"/><rect x="0" y="14.5" width="34" height="4" fill="#ccb000"/><rect x="18" y="15" width="9" height="3" fill="#fff080"/><rect x="2" y="12" width="9" height="4" fill="#b060e0"/><rect x="8" y="19" width="9" height="3" fill="#50c030"/><rect x="27" y="19.5" width="7" height="3" fill="#3010b0"/></pattern><linearGradient id="vtint" x1="0" x2="0" y1="0" y2="1"><stop offset="0" stop-color="#ff4000" stop-opacity="0.3"/><stop offset="0.2" stop-color="#ff8000" stop-opacity="0.08"/><stop offset="0.45" stop-color="#00c000" stop-opacity="0.0"/><stop offset="0.6" stop-color="#20c020" stop-opacity="0.2"/><stop offset="0.75" stop-color="#ff40ff" stop-opacity="0.1"/><stop offset="1" stop-color="#ffd000" stop-opacity="0.08"/></linearGradient></defs>
<rect x="2190" y="298" width="726" height="258" fill="#1a0006" />
<rect x="2213" y="316" width="703" height="240" fill="url(#vid)" />
<rect x="2630" y="298" width="286" height="18" fill="url(#vid)" />
<rect x="2213" y="316" width="703" height="240" fill="url(#vtint)" />
<rect x="2190" y="298" width="726" height="3" fill="#1a0090" />
<text x="2190" y="317" font-family="Liberation Mono" font-weight="bold" font-size="25" fill="#fff8e0" textLength="420" lengthAdjust="spacingAndGlyphs">JOJO dans le metro</text>
<rect x="2608" y="299" width="14" height="20" fill="#fff8c0" />
<rect x="2052" y="556" width="2" height="2" fill="#31363b" />
<rect x="3053" y="123" width="590" height="1160" rx="3" fill="#2b2f34" stroke="#4a4f54" stroke-width="2"/>
<rect x="3061" y="127" width="574" height="1150" rx="3" fill="none" stroke="#4a4f54" stroke-width="2"/>
<rect x="3251" y="132" width="2" height="1140" fill="#4a4f54" />
<rect x="3441" y="132" width="2" height="1140" fill="#4a4f54" />
<rect x="3074" y="132" width="167" height="48" fill="#2e3236" stroke="#4a5055" stroke-width="2"/>
<text x="3157.5" y="170" font-size="37" fill="#eff0f1" font-style="italic" text-anchor="middle" textLength="44" lengthAdjust="spacingAndGlyphs" stroke="#2e3236" stroke-width="1.1">A1</text>
<path d="M3083 216 L3088 216 L3094 209 L3094 231 L3088 224 L3083 224 Z" fill="#eff0f1"/>
<path d="M3098 214 A8 8 0 0 1 3098 226 M3101 210 A12 12 0 0 1 3101 230" fill="none" stroke="#eff0f1" stroke-width="1.6"/>
<path d="M3125 231 L3125 220 A11 11 0 0 1 3147 220 L3147 231" fill="none" stroke="#eff0f1" stroke-width="2"/>
<path d="M3125 223 L3129 225 L3129 232 L3125 232 Z M3147 223 L3143 225 L3143 232 L3147 232 Z" fill="#eff0f1"/>
<circle cx="3178" cy="220" r="12" fill="#da4453"/>
<path d="M3210 230 L3227 213" stroke="#eff0f1" stroke-width="7"/>
<path d="M3217 223 L3227 213" stroke="#2b2f34" stroke-width="3"/>
<path d="M3209 208 l0 6 M3206 211 l6 0" stroke="#eff0f1" stroke-width="1.5"/>
<line x1="3084" y1="280" x2="3232" y2="280" stroke="#64686d" stroke-width="12" stroke-linecap="round"/>
<line x1="3084" y1="280" x2="3158" y2="280" stroke="#24536e" stroke-width="12" stroke-linecap="round"/>
<circle cx="3158" cy="280" r="16.5" fill="#2e3236" stroke="#7a7e82" stroke-width="2"/>
<rect x="3093" y="288" width="2" height="16" fill="#24536e" />
<rect x="3157" y="297" width="2" height="7" fill="#24536e" />
<rect x="3221" y="288" width="2" height="16" fill="#64686d" />
<rect x="3104" y="318" width="98" height="47" fill="#202326" />
<text x="3076" y="356" font-size="38" fill="#eff0f1" font-style="italic" stroke="#2b2f34" stroke-width="1.1">L</text>
<text x="3112" y="356" font-size="38" fill="#eff0f1" font-style="italic" stroke="#202326" stroke-width="1.1">0</text>
<path d="M3172 336 L3182 326 L3192 336 M3172 347 L3182 357 L3192 347" fill="none" stroke="#eff0f1" stroke-width="2"/>
<text x="3219" y="356" font-size="38" fill="#eff0f1" font-style="italic" stroke="#2b2f34" stroke-width="1.1">R</text>
<text x="3128" y="404" font-size="26" fill="#a0a4a8" font-style="italic" text-anchor="end" stroke="#2b2f34" stroke-width="0.8">0</text>
<text x="3130" y="495" font-size="26" fill="#a0a4a8" font-style="italic" text-anchor="end" stroke="#2b2f34" stroke-width="0.8">-5</text>
<rect x="3138" y="379" width="24" height="904" fill="#23262a" />
<rect x="3140" y="380" width="20" height="122" fill="#434636" />
<rect x="3140" y="502" width="20" height="775" fill="#2a4535" />
<rect x="3140" y="481" width="20" height="2" fill="#2b2f34" />
<rect x="3166" y="379" width="24" height="904" fill="#23262a" />
<rect x="3168" y="380" width="20" height="122" fill="#434636" />
<rect x="3168" y="502" width="20" height="775" fill="#2a4535" />
<rect x="3168" y="481" width="20" height="2" fill="#2b2f34" />
<line x1="3222" y1="389" x2="3222" y2="1203" stroke="#64686d" stroke-width="12" stroke-linecap="round"/>
<line x1="3222" y1="714" x2="3222" y2="1203" stroke="#24536e" stroke-width="12" stroke-linecap="round"/>
<circle cx="3222" cy="714" r="16.5" fill="#2e3236" stroke="#7a7e82" stroke-width="2"/>
<rect x="3144" y="1222" width="98" height="48" fill="#202326" />
<text x="3164" y="1261" font-size="38" fill="#eff0f1" font-style="italic" >3</text>
<path d="M3212 1239 L3222 1229 L3232 1239 M3212 1251 L3222 1261 L3232 1251" fill="none" stroke="#eff0f1" stroke-width="2"/>
<rect x="3264" y="132" width="167" height="48" fill="#2e3236" stroke="#4a5055" stroke-width="2"/>
<text x="3347.5" y="170" font-size="37" fill="#eff0f1" font-style="italic" text-anchor="middle" textLength="44" lengthAdjust="spacingAndGlyphs" stroke="#2e3236" stroke-width="1.1">A2</text>
<path d="M3273 216 L3278 216 L3284 209 L3284 231 L3278 224 L3273 224 Z" fill="#eff0f1"/>
<path d="M3288 214 A8 8 0 0 1 3288 226 M3291 210 A12 12 0 0 1 3291 230" fill="none" stroke="#eff0f1" stroke-width="1.6"/>
<path d="M3315 231 L3315 220 A11 11 0 0 1 3337 220 L3337 231" fill="none" stroke="#eff0f1" stroke-width="2"/>
<path d="M3315 223 L3319 225 L3319 232 L3315 232 Z M3337 223 L3333 225 L3333 232 L3337 232 Z" fill="#eff0f1"/>
<circle cx="3368" cy="220" r="12" fill="#da4453"/>
<path d="M3400 230 L3417 213" stroke="#eff0f1" stroke-width="7"/>
<path d="M3407 223 L3417 213" stroke="#2b2f34" stroke-width="3"/>
<path d="M3399 208 l0 6 M3396 211 l6 0" stroke="#eff0f1" stroke-width="1.5"/>
<line x1="3274" y1="280" x2="3422" y2="280" stroke="#64686d" stroke-width="12" stroke-linecap="round"/>
<line x1="3274" y1="280" x2="3348" y2="280" stroke="#24536e" stroke-width="12" stroke-linecap="round"/>
<circle cx="3348" cy="280" r="16.5" fill="#2e3236" stroke="#7a7e82" stroke-width="2"/>
<rect x="3283" y="288" width="2" height="16" fill="#24536e" />
<rect x="3347" y="297" width="2" height="7" fill="#24536e" />
<rect x="3411" y="288" width="2" height="16" fill="#64686d" />
<rect x="3294" y="318" width="98" height="47" fill="#202326" />
<text x="3266" y="356" font-size="38" fill="#eff0f1" font-style="italic" stroke="#2b2f34" stroke-width="1.1">L</text>
<text x="3302" y="356" font-size="38" fill="#eff0f1" font-style="italic" stroke="#202326" stroke-width="1.1">0</text>
<path d="M3362 336 L3372 326 L3382 336 M3362 347 L3372 357 L3382 347" fill="none" stroke="#eff0f1" stroke-width="2"/>
<text x="3409" y="356" font-size="38" fill="#eff0f1" font-style="italic" stroke="#2b2f34" stroke-width="1.1">R</text>
<text x="3318" y="404" font-size="26" fill="#a0a4a8" font-style="italic" text-anchor="end" stroke="#2b2f34" stroke-width="0.8">0</text>
<text x="3320" y="495" font-size="26" fill="#a0a4a8" font-style="italic" text-anchor="end" stroke="#2b2f34" stroke-width="0.8">-5</text>
<rect x="3328" y="379" width="24" height="904" fill="#23262a" />
<rect x="3330" y="380" width="20" height="122" fill="#434636" />
<rect x="3330" y="502" width="20" height="775" fill="#2a4535" />
<rect x="3330" y="481" width="20" height="2" fill="#2b2f34" />
<rect x="3356" y="379" width="24" height="904" fill="#23262a" />
<rect x="3358" y="380" width="20" height="122" fill="#434636" />
<rect x="3358" y="502" width="20" height="775" fill="#2a4535" />
<rect x="3358" y="481" width="20" height="2" fill="#2b2f34" />
<line x1="3412" y1="389" x2="3412" y2="1203" stroke="#64686d" stroke-width="12" stroke-linecap="round"/>
<line x1="3412" y1="714" x2="3412" y2="1203" stroke="#24536e" stroke-width="12" stroke-linecap="round"/>
<circle cx="3412" cy="714" r="16.5" fill="#2e3236" stroke="#7a7e82" stroke-width="2"/>
<rect x="3334" y="1222" width="98" height="48" fill="#202326" />
<text x="3354" y="1261" font-size="38" fill="#eff0f1" font-style="italic" >3</text>
<path d="M3402 1239 L3412 1229 L3422 1239 M3402 1251 L3412 1261 L3422 1251" fill="none" stroke="#eff0f1" stroke-width="2"/>
<rect x="3462" y="132" width="167" height="48" fill="#2e3236" stroke="#4a5055" stroke-width="2"/>
<text x="3545.5" y="170" font-size="37" fill="#eff0f1" font-style="italic" text-anchor="middle" textLength="106" lengthAdjust="spacingAndGlyphs" stroke="#2e3236" stroke-width="1.1">Maître</text>
<path d="M3485 208 L3496 220 L3485 232" fill="none" stroke="#eff0f1" stroke-width="2"/>
<path d="M3535 216 L3540 216 L3546 209 L3546 231 L3540 224 L3535 224 Z" fill="#eff0f1"/>
<path d="M3550 214 A8 8 0 0 1 3550 226 M3553 210 A12 12 0 0 1 3553 230" fill="none" stroke="#eff0f1" stroke-width="1.6"/>
<path d="M3591 230 L3608 213" stroke="#eff0f1" stroke-width="7"/>
<path d="M3598 223 L3608 213" stroke="#2b2f34" stroke-width="3"/>
<path d="M3590 208 l0 6 M3587 211 l6 0" stroke="#eff0f1" stroke-width="1.5"/>
<line x1="3472" y1="280" x2="3620" y2="280" stroke="#64686d" stroke-width="12" stroke-linecap="round"/>
<line x1="3472" y1="280" x2="3546" y2="280" stroke="#24536e" stroke-width="12" stroke-linecap="round"/>
<circle cx="3546" cy="280" r="16.5" fill="#2e3236" stroke="#7a7e82" stroke-width="2"/>
<rect x="3481" y="288" width="2" height="16" fill="#24536e" />
<rect x="3545" y="297" width="2" height="7" fill="#24536e" />
<rect x="3609" y="288" width="2" height="16" fill="#64686d" />
<rect x="3492" y="318" width="98" height="47" fill="#202326" />
<text x="3464" y="356" font-size="38" fill="#eff0f1" font-style="italic" stroke="#2b2f34" stroke-width="1.1">L</text>
<text x="3500" y="356" font-size="38" fill="#eff0f1" font-style="italic" stroke="#202326" stroke-width="1.1">0</text>
<path d="M3560 336 L3570 326 L3580 336 M3560 347 L3570 357 L3580 347" fill="none" stroke="#eff0f1" stroke-width="2"/>
<text x="3607" y="356" font-size="38" fill="#eff0f1" font-style="italic" stroke="#2b2f34" stroke-width="1.1">R</text>
<text x="3516" y="404" font-size="26" fill="#a0a4a8" font-style="italic" text-anchor="end" stroke="#2b2f34" stroke-width="0.8">0</text>
<text x="3518" y="495" font-size="26" fill="#a0a4a8" font-style="italic" text-anchor="end" stroke="#2b2f34" stroke-width="0.8">-5</text>
<rect x="3526" y="379" width="24" height="904" fill="#23262a" />
<rect x="3528" y="380" width="20" height="122" fill="#434636" />
<rect x="3528" y="502" width="20" height="775" fill="#2a4535" />
<rect x="3528" y="481" width="20" height="2" fill="#2b2f34" />
<rect x="3554" y="379" width="24" height="904" fill="#23262a" />
<rect x="3556" y="380" width="20" height="122" fill="#434636" />
<rect x="3556" y="502" width="20" height="775" fill="#2a4535" />
<rect x="3556" y="481" width="20" height="2" fill="#2b2f34" />
<line x1="3610" y1="389" x2="3610" y2="1203" stroke="#64686d" stroke-width="12" stroke-linecap="round"/>
<line x1="3610" y1="714" x2="3610" y2="1203" stroke="#24536e" stroke-width="12" stroke-linecap="round"/>
<circle cx="3610" cy="714" r="16.5" fill="#2e3236" stroke="#7a7e82" stroke-width="2"/>
<rect x="3532" y="1222" width="98" height="48" fill="#202326" />
<text x="3552" y="1261" font-size="38" fill="#eff0f1" font-style="italic" >3</text>
<path d="M3600 1239 L3610 1229 L3620 1239 M3600 1251 L3610 1261 L3620 1251" fill="none" stroke="#eff0f1" stroke-width="2"/>
<rect x="3651" y="123" width="186" height="1160" rx="3" fill="#2b2f34" stroke="#4a4f54" stroke-width="2"/>
<rect x="3656" y="127" width="178" height="1150" rx="3" fill="none" stroke="#4a4f54" stroke-width="2"/>
<text x="3672" y="179" font-size="38" fill="#7b7e82" font-style="italic" textLength="178" lengthAdjust="spacingAndGlyphs" clip-path="url(#rpclip)" stroke="#2b2f34" stroke-width="1.1">Clip source</text>
<defs><clipPath id="rpclip"><rect x="3656" y="120" width="178" height="1170"/></clipPath></defs>
<rect x="3682" y="192" width="152" height="208" fill="#4a4a4a" />
<rect x="3682" y="405" width="152" height="210" fill="#4a4a4a" />
<text x="3670" y="689" font-size="38" fill="#7b7e82" font-style="italic" textLength="103" lengthAdjust="spacingAndGlyphs" stroke="#2b2f34" stroke-width="1.1">Sortie</text>
<path d="M3796 664 L3796 687 M3786 670 h20 v7 h-20 z M3789 682 h14 v5 h-14 z" fill="none" stroke="#eff0f1" stroke-width="2"/>
<circle cx="3696" cy="733" r="7" fill="none" stroke="#5a5e62" stroke-width="1.8"/><path d="M3693 724 h6 M3696 733 l3 -3" stroke="#5a5e62" stroke-width="1.8"/>
<path d="M3680 733 l5 -5 v10 z" fill="#5a5e62"/>
<circle cx="3752" cy="733" r="7" fill="none" stroke="#5a5e62" stroke-width="1.8"/><path d="M3749 724 h6 M3752 733 l3 -3" stroke="#5a5e62" stroke-width="1.8"/>
<path d="M3757 742 h8 M3761 738 v8" stroke="#5a5e62" stroke-width="1.8"/>
<circle cx="3807" cy="733" r="7" fill="none" stroke="#5a5e62" stroke-width="1.8"/><path d="M3804 724 h6 M3807 733 l3 -3" stroke="#5a5e62" stroke-width="1.8"/>
<path d="M3823 733 l-5 -5 v10 z" fill="#5a5e62"/>
<g clip-path="url(#rpclip)">
<text x="3669" y="799" font-size="38" fill="#7b7e82" font-style="italic" textLength="188" lengthAdjust="spacingAndGlyphs" stroke="#2b2f34" stroke-width="1.1">Durée de la</text>
<text x="3669" y="849" font-size="38" fill="#7b7e82" font-style="italic" textLength="250" lengthAdjust="spacingAndGlyphs" stroke="#2b2f34" stroke-width="1.1">Durée de sortie</text>
<text x="3669" y="910" font-size="38" fill="#7b7e82" font-style="italic" textLength="215" lengthAdjust="spacingAndGlyphs" stroke="#2b2f34" stroke-width="1.1">Vitesse avant</text>
<text x="3669" y="981" font-size="38" fill="#7b7e82" font-style="italic" textLength="90" lengthAdjust="spacingAndGlyphs" stroke="#2b2f34" stroke-width="1.1">Après</text>
<text x="3720" y="1148" font-size="38" fill="#7b7e82" font-style="italic" textLength="265" lengthAdjust="spacingAndGlyphs" stroke="#2b2f34" stroke-width="1.1">Compensation</text>
<text x="3720" y="1206" font-size="38" fill="#7b7e82" font-style="italic" textLength="150" lengthAdjust="spacingAndGlyphs" stroke="#2b2f34" stroke-width="1.1">Préserver</text>
</g>
<rect x="3673" y="1118" width="31" height="31" rx="3" fill="none" stroke="#5a5e62" stroke-width="2"/>
<rect x="3679" y="1124" width="19" height="19" fill="#5a5e62" />
<rect x="3673" y="1176" width="31" height="31" rx="3" fill="none" stroke="#5a5e62" stroke-width="2"/>
<rect x="3679" y="1182" width="19" height="19" fill="#5a5e62" />
<rect x="3656" y="1236" width="178" height="2" fill="#4a4f54" />
<rect x="3670" y="1250" width="41" height="14" rx="7" fill="#7a7e82"/>
<rect x="1920" y="1287" width="1920" height="2" fill="#4a4f54" />
<rect x="1920" y="1369" width="1920" height="2" fill="#3e4348" />
<rect x="1920" y="1420" width="1920" height="2" fill="#1e2124" />
<rect x="1920" y="1490" width="1920" height="2" fill="#1e2124" />
<rect x="1920" y="1492" width="1920" height="2" fill="#474d55" />
<text x="3730" y="1456" font-size="38" fill="#bfc3c6" font-style="italic" textLength="128" lengthAdjust="spacingAndGlyphs" stroke="#31363b" stroke-width="1.1">00:16:5</text>
<text x="3570" y="1456" font-size="38" fill="#bfc3c6" font-style="italic" textLength="34" lengthAdjust="spacingAndGlyphs" stroke="#31363b" stroke-width="1.1">/9</text>
<rect x="3618" y="1482" width="3" height="8" fill="#d0d0d0" />
<rect x="3726" y="1468" width="3" height="22" fill="#d0d0d0" />
<rect x="3834" y="1482" width="3" height="8" fill="#d0d0d0" />
<rect x="1920" y="1510" width="1901" height="2" fill="#202326" />
<rect x="3818" y="1510" width="2" height="640" fill="#202326" />
<rect x="1920" y="1668" width="1900" height="4" fill="#202326" />
<rect x="1920" y="1672" width="1898" height="157" fill="#324e62" />
<rect x="1920" y="1672" width="332" height="157" fill="#000000" />
<defs><pattern id="ostr" x="1922" y="0" width="11.25" height="10" patternUnits="userSpaceOnUse"><rect x="0" width="3.5" height="10" fill="#b05510"/></pattern></defs>
<rect x="1922" y="1676" width="328" height="149" fill="url(#ostr)" />
<rect x="1920" y="1828" width="1898" height="2" fill="#202326" />
<rect x="1920" y="1830" width="1898" height="159" fill="#35333d" />
<rect x="1920" y="1988" width="1898" height="3" fill="#202326" />
<rect x="1920" y="1991" width="1898" height="157" fill="#35333d" />
<rect x="1920" y="2147" width="1900" height="3" fill="#202326" />
<rect x="1890" y="2256" width="1185" height="26" rx="13" fill="#606468"/>
<text x="2955" y="2330" font-size="38" fill="#eff0f1" font-style="italic" textLength="198" lengthAdjust="spacingAndGlyphs" stroke="#31363b" stroke-width="1.1">Sélectionner</text>
<rect x="3165" y="2296" width="2" height="48" fill="#4a4f54" />
<rect x="3459" y="2296" width="2" height="48" fill="#4a4f54" />
<rect x="3177.0" y="2293" width="51" height="50" rx="4" fill="#4d5156"/>
<rect x="3232.5" y="2293" width="51" height="50" rx="4" fill="#4d5156"/>
<rect x="3288.0" y="2293" width="51" height="50" rx="4" fill="#4d5156"/>
<rect x="3343.5" y="2293" width="51" height="50" rx="4" fill="#4d5156"/>
<rect x="3399.0" y="2293" width="51" height="50" rx="4" fill="#4d5156"/>
<path d="M3191 2305 h14 l11 11 l-12 12 l-13 -13 z" fill="#eff0f1"/><circle cx="3198" cy="2311" r="2.5" fill="#4d5156"/>
<rect x="3247" y="2306" width="23" height="25" fill="none" stroke="#eff0f1" stroke-width="3"/><path d="M3247 2313 h23 M3247 2324 h23 M3253 2306 v25 M3264 2306 v25" stroke="#eff0f1" stroke-width="2.5"/>
<path d="M3300 2318 h26 M3313 2307 v22 M3300 2318 l6 -6 v12 z M3326 2318 l-6 -6 v12 z" stroke="#eff0f1" stroke-width="3" fill="#eff0f1"/>
<path d="M3360 2306 v25 M3360 2307 l14 5 l-14 6 z" stroke="#eff0f1" stroke-width="2.5" fill="#eff0f1"/>
<path d="M3414 2306 v25 M3410 2318 h-6 M3420 2318 h16" stroke="#eff0f1" stroke-width="3"/>
<rect x="3486" y="2306" width="24" height="24" fill="none" stroke="#eff0f1" stroke-width="2" stroke-dasharray="6 12"/><rect x="3491" y="2311" width="14" height="14" fill="none" stroke="#eff0f1" stroke-width="2"/>
<path d="M3542 2306 h24 v24 h-24 z M3547 2325 l12 -12 M3547 2325 h8 M3547 2325 v-8" fill="none" stroke="#eff0f1" stroke-width="2"/>
<line x1="3594" y1="2318" x2="3776" y2="2318" stroke="#24536e" stroke-width="10" stroke-linecap="round"/>
<line x1="3594" y1="2318" x2="3620" y2="2318" stroke="#64686d" stroke-width="10" stroke-linecap="round"/>
<circle cx="3621" cy="2318" r="16" fill="#2e3236" stroke="#7a7e82" stroke-width="2"/>
<path d="M3798 2306 h8 M3798 2306 v8 M3824 2306 h-8 M3824 2306 v8 M3798 2330 h8 M3798 2330 v-8 M3824 2330 h-8 M3824 2330 v-8 M3802 2326 l18 -18" fill="none" stroke="#eff0f1" stroke-width="2"/>
</g>
<defs><linearGradient id="tb3" x1="1920" x2="3566" y1="0" y2="0" gradientUnits="userSpaceOnUse"><stop offset="0" stop-color="#929292"/><stop offset="0.35" stop-color="#a8a8a8"/><stop offset="0.7" stop-color="#cbbfca"/><stop offset="1" stop-color="#c4c4c4"/></linearGradient></defs>
<rect x="1920" y="555" width="1656" height="1071" fill="#3a3a3a" />
<rect x="1920" y="555" width="1652" height="1" fill="#111" />
<rect x="1920" y="556" width="1652" height="1066" fill="#ffffff" />
<rect x="1920" y="558" width="1648" height="6" fill="#f3f3f3" />
<rect x="1920" y="564" width="1646" height="50" fill="url(#tb3)" />
<rect x="1920" y="616" width="1646" height="1002" fill="#31363b" />
<rect x="1920" y="616" width="1646" height="2" fill="#202327" />
<rect x="3572" y="556" width="2" height="1068" fill="#888888" />
<rect x="1920" y="1622" width="1654" height="2" fill="#888888" />
<rect x="3532" y="574" width="32" height="28" fill="#555555" />
<rect x="3532" y="574" width="30" height="26" fill="#ffffff" />
<rect x="3534" y="576" width="28" height="24" fill="#d8d4ce" />
<path d="M3541 581 L3554 593 M3554 581 L3541 593" stroke="#000" stroke-width="3.2"/>
<defs><clipPath id="dlgclip"><rect x="1920" y="556" width="1660" height="1070"/></clipPath></defs>
<g clip-path="url(#dlgclip)">
<rect x="2042" y="619" width="159" height="57" fill="#2a2e32" />
<path d="M1900 677 L1900 619 L2035 619 Q2041 619 2041 625 L2041 677" fill="#31363b" stroke="#5d6166" stroke-width="2"/>
<rect x="2041" y="675" width="1525" height="2" fill="#5d6166" />
<text x="2025" y="662" font-size="38" fill="#eff0f1" font-style="italic" text-anchor="end" textLength="158" lengthAdjust="spacingAndGlyphs" stroke="#31363b" stroke-width="1.1">Exécution</text>
<text x="2070" y="662" font-size="38" fill="#eff0f1" font-style="italic" textLength="108" lengthAdjust="spacingAndGlyphs" stroke="#2a2e32" stroke-width="1.1">Scripts</text>
<rect x="1900" y="697" width="1653" height="754" rx="3" fill="#222629" stroke="#6b6f73" stroke-width="2"/>
<rect x="1900" y="698" width="1652" height="132" fill="#224d66" />
<text x="2143" y="740" font-size="38" fill="#eff0f1" font-weight="bold" font-style="italic" text-anchor="end" textLength="420" lengthAdjust="spacingAndGlyphs" >2023_clip_l_amour.mp4</text>
<text x="2174" y="793" font-size="38" fill="#eff0f1" font-style="italic" text-anchor="end" textLength="460" lengthAdjust="spacingAndGlyphs" stroke="#224d66" stroke-width="1.0">(1920x1080, 2841 @ 44 fps)</text>
</g>
<rect x="1923" y="1533" width="172" height="70" rx="4" fill="#2e3236" stroke="#474b50" stroke-width="2"/>
<text x="1941" y="1581" font-size="38" fill="#7a7e82" font-style="italic" textLength="141" lengthAdjust="spacingAndGlyphs" stroke="#2e3236" stroke-width="1.1">Nettoyer</text>
<rect x="3144" y="1532" width="230" height="72" rx="4" fill="#2e3236" stroke="#474b50" stroke-width="2"/>
<path d="M3172 1564 l10 11 l10 -11" fill="none" stroke="#7a7e82" stroke-width="2"/>
<text x="3209" y="1582" font-size="38" fill="#7a7e82" font-style="italic" textLength="142" lengthAdjust="spacingAndGlyphs" stroke="#2e3236" stroke-width="1.1">Partager</text>
<rect x="3391" y="1533" width="163" height="71" rx="4" fill="#2e3236" stroke="#7a7e82" stroke-width="2"/>
<text x="3418" y="1582" font-size="38" fill="#ffffff" font-style="italic" textLength="114" lengthAdjust="spacingAndGlyphs" stroke="#2e3236" stroke-width="1.1">Fermer</text>
<rect x="0" y="2342" width="3840" height="58" fill="#555753" />
<rect x="0" y="2340" width="1918" height="2" fill="#8a8a8a" />
<rect x="0" y="2343" width="3840" height="2" fill="#3a3b39" />
<circle cx="44" cy="2372" r="21" fill="none" stroke="#d0d0d0" stroke-width="3"/>
<path d="M32 2360 v14 q0 8 8 8 h17 v-12 a4.75 4.75 0 0 0 -9.5 0 v8 m0 -8 a4.75 4.75 0 0 0 -9.5 0 v8" fill="none" stroke="#d0d0d0" stroke-width="3" stroke-linejoin="round"/>
<rect x="77" y="2357" width="46" height="33" fill="#5bc4a8" />
<rect x="77" y="2357" width="46" height="5" fill="#3e9c84" />
<rect x="127" y="2357" width="46" height="33" fill="#5bc4a8" />
<rect x="127" y="2357" width="46" height="5" fill="#ffffff" />
<rect x="131" y="2354" width="14" height="4" fill="#ffffff" />
<rect x="183" y="2352" width="42" height="41" rx="8" fill="#222222" stroke="#444" stroke-width="1"/>
<text x="189" y="2372" font-size="17" fill="#e0e0e0" font-weight="bold" >$</text>
<rect x="202" y="2369" width="10" height="2.5" fill="#e0e0e0" />
<rect x="238" y="2352" width="41" height="41" rx="8" fill="#f36b30" />
<circle cx="258" cy="2374" r="13" fill="#ffffff"/><circle cx="259" cy="2376" r="6.5" fill="#f36b30"/><path d="M262 2358 q10 6 9 16 q-4 -8 -12 -8 z" fill="#ffffff"/><path d="M252 2370 q4 -4 10 -3" fill="none" stroke="#f36b30" stroke-width="2.5"/>
<rect x="321" y="2352" width="41" height="41" rx="8" fill="#b50d0d" />
<text x="328" y="2384" font-size="27" fill="#ffffff" font-weight="bold" font-style="italic" >Fz</text>
<rect x="376" y="2352" width="41" height="41" rx="8" fill="#3d66b0" />
<rect x="381" y="2360" width="31" height="26" fill="#f0f0e8" />
<path d="M381 2361 L396 2375 L412 2361" fill="none" stroke="#b0b0b0" stroke-width="1.5"/>
<rect x="430" y="2352" width="41" height="41" rx="8" fill="#9c9ad8" />
<rect x="439" y="2358" width="23" height="30" fill="#ffffff" />
<rect x="443" y="2364" width="15" height="1.5" fill="#7070c0" />
<rect x="443" y="2368" width="15" height="1.5" fill="#7070c0" />
<rect x="443" y="2372" width="15" height="1.5" fill="#7070c0" />
<rect x="443" y="2376" width="15" height="1.5" fill="#7070c0" />
<rect x="484" y="2352" width="41" height="41" rx="8" fill="#3a3a3a" />
<rect x="505" y="2371" width="20" height="22" fill="#f36b30" />
<text x="489" y="2368" font-size="17" fill="#ffffff" font-weight="bold" >+</text>
<text x="509" y="2368" font-size="17" fill="#ffffff" font-weight="bold" >−</text>
<text x="489" y="2389" font-size="17" fill="#ffffff" font-weight="bold" >×</text>
<text x="509" y="2389" font-size="17" fill="#ffffff" font-weight="bold" >=</text>
<rect x="538" y="2352" width="41" height="41" rx="8" fill="#2a5ca8" />
<rect x="544" y="2362" width="30" height="21" rx="3" fill="#ffffff" />
<rect x="555" y="2358" width="12" height="3" fill="#ffffff" />
<rect x="547" y="2365" width="4" height="2" fill="#2a5ca8" />
<circle cx="560" cy="2373" r="6" fill="none" stroke="#2a5ca8" stroke-width="2.5"/>
<rect x="592" y="2352" width="41" height="41" rx="8" fill="#b09a40" />
<path d="M596 2382 h8 M603 2378 h15 v9 h-15 z" fill="#ffffff" stroke="#ffffff" stroke-width="3"/><path d="M618 2382 h6 q6 0 6 -6 q0 -5 -4 -7 q-5 -3 -1 -8 q2 -2 5 -2" fill="none" stroke="#ffffff" stroke-width="2.5"/>
<defs><linearGradient id="cw" x1="0" y1="0" x2="1" y2="1"><stop offset="0" stop-color="#a020f0"/><stop offset="0.3" stop-color="#ff2080"/><stop offset="0.6" stop-color="#ffd000"/><stop offset="1" stop-color="#40e020"/></linearGradient></defs>
<rect x="646" y="2352" width="41" height="41" rx="8" fill="url(#cw)" />
<rect x="700" y="2352" width="41" height="41" rx="8" fill="#e8303a" />
<path d="M712 2364 L732 2377 L712 2388 Z" fill="#ffffff"/>
<rect x="754" y="2352" width="41" height="41" rx="8" fill="#3a8030" />
<rect x="763" y="2360" width="23" height="30" fill="#ffffff" />
<rect x="767" y="2366" width="8" height="8" fill="#3a8030" />
<path d="M655 2366 L666 2356 L677 2366" fill="none" stroke="#d8d8d8" stroke-width="4"/>
<path d="M709 2366 L720 2356 L731 2366" fill="none" stroke="#d8d8d8" stroke-width="4"/>
<path d="M763 2366 L774 2356 L785 2366" fill="none" stroke="#d8d8d8" stroke-width="4"/>
<rect x="808" y="2352" width="41" height="41" rx="8" fill="#101880" />
<path d="M816 2378 a12 12 0 0 1 25 0" fill="none" stroke="#ffffff" stroke-width="3"/>
<rect x="820" y="2370" width="17" height="12" fill="#ff9000" />
<rect x="823" y="2373" width="11" height="6" fill="#ffe000" />
<rect x="862" y="2352" width="41" height="41" rx="8" fill="#3a3a3a" />
<rect x="862" y="2352" width="41" height="11" fill="#ffffff" />
<path d="M866 2353 l5 5 l-5 5" fill="none" stroke="#3a3a3a" stroke-width="2.5"/>
<path d="M875 2353 l5 5 l-5 5" fill="none" stroke="#3a3a3a" stroke-width="2.5"/>
<path d="M884 2353 l5 5 l-5 5" fill="none" stroke="#3a3a3a" stroke-width="2.5"/>
<path d="M893 2353 l5 5 l-5 5" fill="none" stroke="#3a3a3a" stroke-width="2.5"/>
<rect x="916" y="2352" width="41" height="41" rx="8" fill="#2a80e0" />
<ellipse cx="936" cy="2380" rx="16" ry="7" fill="#f0f0f0"/><circle cx="936" cy="2373" r="9" fill="#f0f0f0"/>
<path d="M925 2366 L936 2356 L947 2366" fill="none" stroke="#d8d8d8" stroke-width="4"/>
<rect x="970" y="2352" width="41" height="41" rx="8" fill="#c8c8c8" />
<text x="974" y="2382" font-size="24" fill="#303030" font-weight="bold" textLength="32" lengthAdjust="spacingAndGlyphs" >xxx</text>
<rect x="1068" y="2358" width="29" height="29" rx="4" fill="#4a5d8a" />
<rect x="1073" y="2364" width="19" height="15" fill="#b8b8b0" />
<text x="1117" y="2387" font-size="37" fill="#dcdcdc" textLength="64" lengthAdjust="spacingAndGlyphs" >[C...</text>
<rect x="1218" y="2358" width="29" height="29" rx="4" fill="#c86a40" />
<path d="M1228 2366 A8 8 0 1 0 1236 2365.5" fill="none" stroke="#b8b8b8" stroke-width="5"/><path d="M1231 2362 l5 4 l-5 3 z" fill="#b8b8b8"/>
<text x="1267" y="2387" font-size="37" fill="#dcdcdc" textLength="71" lengthAdjust="spacingAndGlyphs" >[O...</text>
<rect x="1368" y="2358" width="29" height="29" rx="4" fill="#c86a40" />
<path d="M1378 2366 A8 8 0 1 0 1386 2365.5" fill="none" stroke="#b8b8b8" stroke-width="5"/><path d="M1381 2362 l5 4 l-5 3 z" fill="#b8b8b8"/>
<text x="1417" y="2387" font-size="37" fill="#dcdcdc" textLength="70" lengthAdjust="spacingAndGlyphs" >[N...</text>
<rect x="1518" y="2358" width="29" height="29" rx="4" fill="#c86a40" />
<path d="M1528 2366 A8 8 0 1 0 1536 2365.5" fill="none" stroke="#b8b8b8" stroke-width="5"/><path d="M1531 2362 l5 4 l-5 3 z" fill="#b8b8b8"/>
<text x="1567" y="2387" font-size="37" fill="#dcdcdc" textLength="67" lengthAdjust="spacingAndGlyphs" >[A...</text>
<rect x="1668" y="2358" width="29" height="29" rx="4" fill="#c86a40" />
<path d="M1678 2366 A8 8 0 1 0 1686 2365.5" fill="none" stroke="#b8b8b8" stroke-width="5"/><path d="M1681 2362 l5 4 l-5 3 z" fill="#b8b8b8"/>
<text x="1717" y="2387" font-size="37" fill="#dcdcdc" textLength="78" lengthAdjust="spacingAndGlyphs" >[Aj...</text>
<rect x="1818" y="2358" width="29" height="29" rx="4" fill="#c86a40" />
<path d="M1828 2366 A8 8 0 1 0 1836 2365.5" fill="none" stroke="#b8b8b8" stroke-width="5"/><path d="M1831 2362 l5 4 l-5 3 z" fill="#b8b8b8"/>
<text x="1867" y="2387" font-size="37" fill="#dcdcdc" textLength="67" lengthAdjust="spacingAndGlyphs" >[C...</text>
<rect x="1968" y="2358" width="29" height="29" rx="4" fill="#c86a40" />
<path d="M1978 2366 A8 8 0 1 0 1986 2365.5" fill="none" stroke="#b8b8b8" stroke-width="5"/><path d="M1981 2362 l5 4 l-5 3 z" fill="#b8b8b8"/>
<text x="2017" y="2387" font-size="37" fill="#dcdcdc" textLength="77" lengthAdjust="spacingAndGlyphs" >[M...</text>
<rect x="2118" y="2358" width="29" height="29" rx="4" fill="#3d66b0" />
<rect x="2123" y="2364" width="19" height="15" fill="#f0f0e8" />
<text x="2167" y="2387" font-size="37" fill="#dcdcdc" font-weight="bold" textLength="82" lengthAdjust="spacingAndGlyphs" >9 r...</text>
<rect x="2270" y="2358" width="31" height="29" fill="#5bc4a8" />
<rect x="2270" y="2358" width="31" height="4" fill="#3e9c84" />
<text x="2319" y="2387" font-size="37" fill="#dcdcdc" textLength="78" lengthAdjust="spacingAndGlyphs" >Bu...</text>
<rect x="2420" y="2362" width="31" height="22" fill="#10102a" />
<text x="2469" y="2387" font-size="37" fill="#dcdcdc" textLength="78" lengthAdjust="spacingAndGlyphs" >Ca...</text>
<path d="M2584 2362 L2600 2373 L2584 2384 Z" fill="#3a7fd0"/>
<rect x="2570" y="2368" width="12" height="2" fill="#3a7fd0" />
<rect x="2570" y="2373" width="12" height="2" fill="#3a7fd0" />
<rect x="2570" y="2378" width="12" height="2" fill="#3a7fd0" />
<text x="2619" y="2387" font-size="37" fill="#dcdcdc" textLength="74" lengthAdjust="spacingAndGlyphs" >Sa...</text>
<rect x="2712" y="2345" width="152" height="55" fill="#5aab9a" />
<rect x="2720" y="2358" width="32" height="31" rx="4" fill="#1c2a22" stroke="#111" stroke-width="1.5"/>
<path d="M2724 2376 h7 l3 -8 l4 14 l3 -6 h7" fill="none" stroke="#30d050" stroke-width="1.5"/>
<text x="2770" y="2387" font-size="37" fill="#ffffff" textLength="66" lengthAdjust="spacingAndGlyphs" >M...</text>
<text x="2902" y="2386" font-size="37" fill="#c8c8c8" textLength="24" lengthAdjust="spacingAndGlyphs" >fr</text>
<rect x="2943" y="2353" width="43" height="31" rx="3" fill="#f0f0f0" stroke="#d0d0d0" stroke-width="1"/>
<defs><linearGradient id="scr" x1="0" x2="1" y1="0" y2="1"><stop offset="0" stop-color="#888"/><stop offset="0.5" stop-color="#505050"/><stop offset="1" stop-color="#404040"/></linearGradient></defs>
<rect x="2947" y="2357" width="35" height="24" fill="url(#scr)" />
<path d="M2951 2384 h28 l3 8 h-34 z" fill="#e8e8e8"/>
<path d="M2946 2350 L2984 2379 L2946 2379 Z" fill="#e0c050" stroke="#a08020" stroke-width="1.2"/><path d="M2952 2362 L2971 2376 L2952 2376 Z" fill="#606060" stroke="#c0a040" stroke-width="1"/>
<path d="M3001 2363 h42 v26 h-42 z" fill="#f0d840" stroke="#c8a820" stroke-width="1"/><path d="M2999 2380 L3037 2360 q6 2 5 8 L3003 2387 z" fill="#f8e870" stroke="#c8a820" stroke-width="1"/>
<rect x="3046" y="2346" width="80" height="54" fill="#c8c8c8" />
<rect x="3048" y="2348" width="76" height="50" fill="#000000" />
<path d="M3048 2398 V2368 H3048 V2368 H3053 V2366 H3057 V2365 H3061 V2369 H3065 V2365 H3069 V2368 H3073 V2367 H3077 V2364 H3081 V2370 H3085 V2367 H3088 V2365 H3092 V2368 H3096 V2363 H3100 V2366 H3104 V2371 H3108 V2360 H3112 V2363 H3116 V2365 H3120 V2361 H3124 V2364 H3124 V2398 Z" fill="#00a0f0"/>
<path d="M3048 2398 V2375 H3048 V2380 H3053 V2374 H3057 V2373 H3061 V2381 H3065 V2373 H3069 V2376 H3073 V2379 H3077 V2372 H3081 V2378 H3085 V2379 H3088 V2373 H3092 V2376 H3096 V2375 H3100 V2374 H3104 V2379 H3108 V2372 H3112 V2371 H3116 V2373 H3120 V2373 H3124 V2372 H3124 V2398 Z" fill="#0070b8"/>
<path d="M3106 2366 l0 19 l5 -4 l4 8 l3 -1.5 l-4 -8 h6 z" fill="#000000" stroke="#ffffff" stroke-width="1.3"/>
<ellipse cx="3159" cy="2373" rx="15" ry="22" fill="#6a6c68"/><path d="M3153 2362 l12 10 l-6 6 v-20 l6 6 l-12 10" fill="none" stroke="#8a8c88" stroke-width="2"/>
<rect x="3194" y="2358" width="34" height="35" rx="3" fill="none" stroke="#d8d8d8" stroke-width="3"/>
<rect x="3203" y="2353" width="16" height="5" fill="#d8d8d8" />
<rect x="3199" y="2363" width="24" height="26" fill="#d8d8d8" />
<rect x="3244" y="2360" width="38" height="33" rx="4" fill="none" stroke="#d8d8d8" stroke-width="3"/>
<rect x="3258" y="2353" width="10" height="8" fill="#d8d8d8" />
<rect x="3261" y="2366" width="4" height="12" fill="#d8d8d8" />
<rect x="3261" y="2382" width="4" height="4" fill="#d8d8d8" />
<path d="M3314 2352 L3334 2360 V2374 Q3334 2390 3314 2398 Q3294 2390 3294 2374 V2360 Z" fill="#d8d8d8"/><path d="M3314 2358 L3328 2364 V2374 Q3328 2386 3314 2392 Z" fill="#909090"/>
<circle cx="3328" cy="2389" r="7" fill="#f07030"/>
<path d="M3345 2364 a28 28 0 0 1 42 0 M3351 2371 a20 20 0 0 1 30 0 M3357 2378 a11 11 0 0 1 18 0" fill="none" stroke="#d8d8d8" stroke-width="4"/><circle cx="3366" cy="2386" r="4" fill="#d8d8d8"/>
<path d="M3399 2373 Q3419 2355 3440 2373 Q3419 2391 3399 2373 Z" fill="none" stroke="#d8d8d8" stroke-width="3"/><circle cx="3419" cy="2373" r="5" fill="#d8d8d8"/><rect x="3424" y="2358" width="16" height="30" fill="#d8d8d8"/>
<path d="M3449 2366 h8 l10 -9 v32 l-10 -9 h-8 z" fill="#d8d8d8"/><path d="M3473 2364 a12 12 0 0 1 0 18 M3479 2358 a20 20 0 0 1 0 30 M3485 2354 a27 27 0 0 1 0 38" fill="none" stroke="#d8d8d8" stroke-width="3"/>
<text x="3511" y="2386" font-size="37" fill="#dcdcdc" textLength="315" lengthAdjust="spacingAndGlyphs" >mer. 22 févr., 21:41</text></svg></body></html>
